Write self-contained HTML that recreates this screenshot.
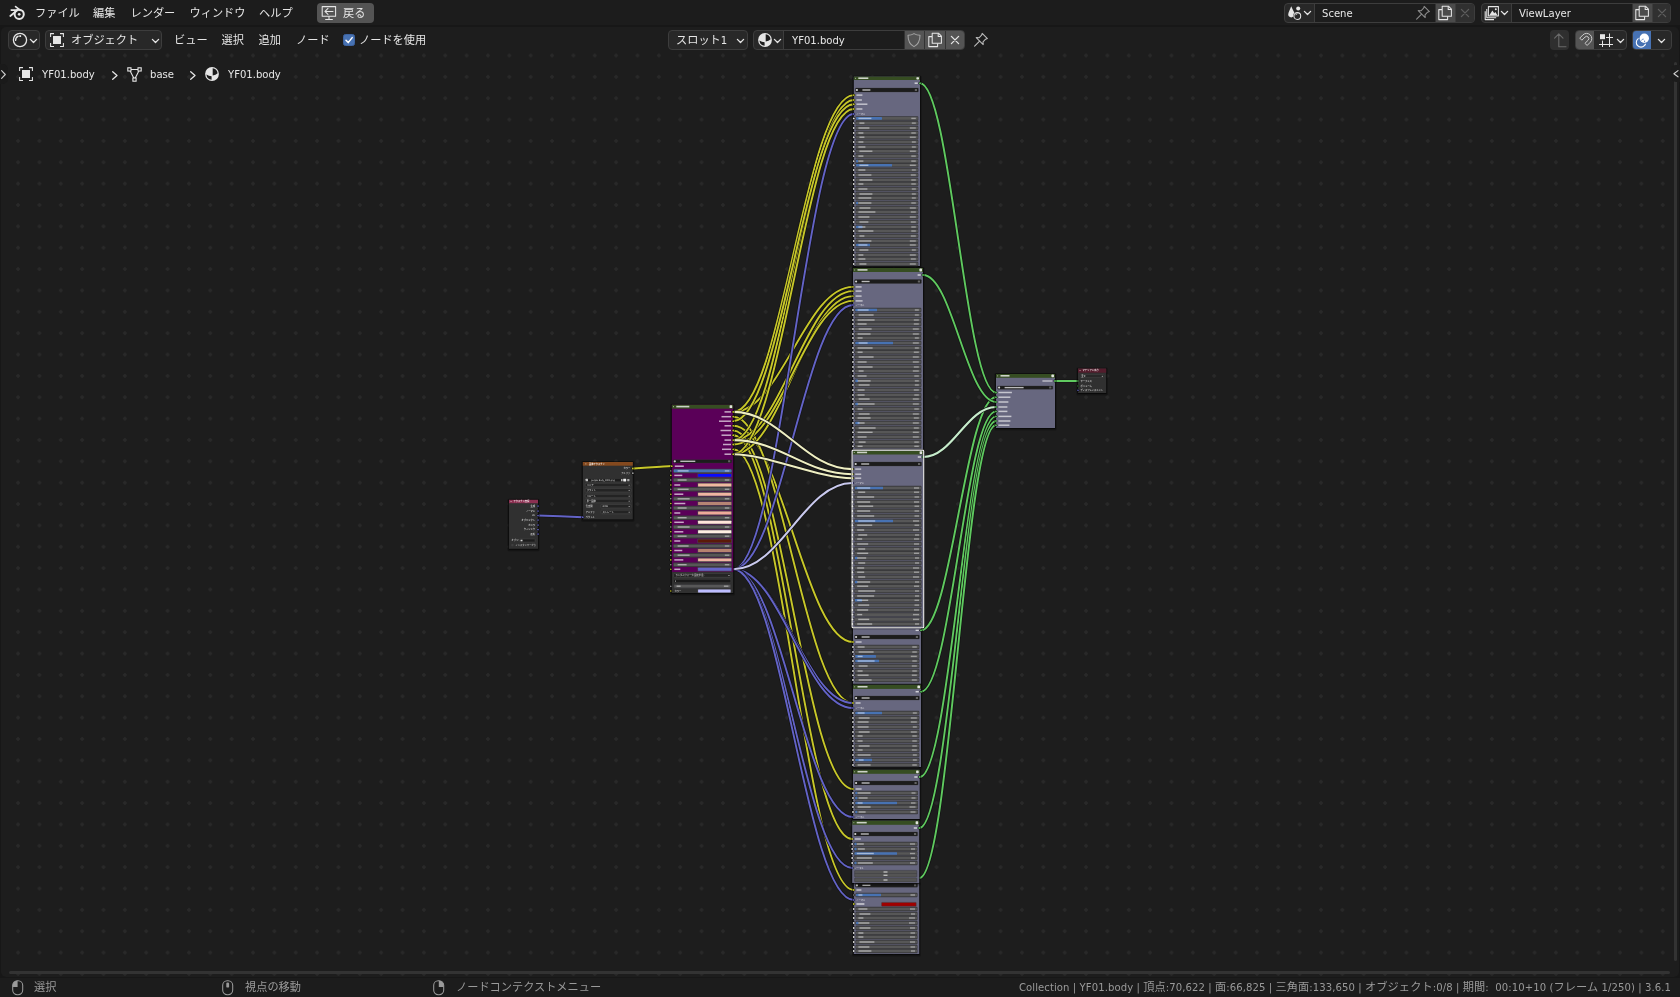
<!DOCTYPE html>
<html lang="ja"><head><meta charset="utf-8"><title>Blender</title>
<style>
html,body{margin:0;padding:0;background:#171717;overflow:hidden}
body{width:1680px;height:997px;position:relative;font-family:"DejaVu Sans","Liberation Sans","Noto Sans CJK JP",sans-serif;font-size:11px;color:#e6e6e6}
#editor{position:absolute;left:1px;top:27px;width:1678px;height:950px;background:#1d1d1d;border-radius:5px;overflow:hidden}
#grid{position:absolute;left:0;top:26px;width:1678px;height:924px;background-image:radial-gradient(circle at center,#292929 0,#292929 1.5px,rgba(41,41,41,0) 1.75px);background-size:21.37px 21.37px;background-position:6.4px -8.2px}
#graph{position:absolute;left:-1px;top:-27px;font-family:"DejaVu Sans","Liberation Sans","Noto Sans CJK JP",sans-serif;font-stretch:condensed;font-weight:500;will-change:transform}

.t{position:absolute;white-space:nowrap;line-height:16px;height:16px;font-size:11.2px;color:#e6e6e6;font-stretch:condensed}
#chrome{position:absolute;left:0;top:0;width:1680px;height:997px;will-change:transform}
.d{color:#9a9a9a}
.b{position:absolute;box-sizing:border-box}
.ic{position:absolute;overflow:visible}
#topbar{position:absolute;left:0;top:0;width:1680px;height:25px;background:#1c1c1c}
#status{position:absolute;left:0;top:978px;width:1680px;height:19px;background:#1c1c1c}
.btn{background:#282828;border:1px solid #3d3d3d;border-radius:4px}
.fld{background:#1d1d1d;border:1px solid #3d3d3d}

</style></head><body>
<div id="editor"><div id="grid"></div><svg id="graph" width="1680" height="997" viewBox="0 0 1680 997">
<path d="M538.0,515.5 C540.4,515.5 580.4,517.2 582.8,517.2" fill="none" stroke="#121212" stroke-width="3.1" stroke-opacity="0.95"/>
<path d="M538.0,515.5 C540.4,515.5 580.4,517.2 582.8,517.2" fill="none" stroke="#6363c7" stroke-width="2.0"/>
<path d="M632.8,468.5 C636.3,468.5 668.3,466.0 671.8,466.0" fill="none" stroke="#121212" stroke-width="3.1" stroke-opacity="0.95"/>
<path d="M632.8,468.5 C636.3,468.5 668.3,466.0 671.8,466.0" fill="none" stroke="#c7c729" stroke-width="2.0"/>
<path d="M733.2,425.8 C781.1,425.8 805.1,642.0 853.0,642.0" fill="none" stroke="#121212" stroke-width="3.3" stroke-opacity="0.95"/>
<path d="M733.2,425.8 C781.1,425.8 805.1,642.0 853.0,642.0" fill="none" stroke="#c7c729" stroke-width="1.9"/>
<path d="M733.2,416.7 C781.1,416.7 805.1,703.0 853.0,703.0" fill="none" stroke="#121212" stroke-width="3.3" stroke-opacity="0.95"/>
<path d="M733.2,416.7 C781.1,416.7 805.1,703.0 853.0,703.0" fill="none" stroke="#c7c729" stroke-width="1.9"/>
<path d="M733.2,430.5 C781.1,430.5 805.1,789.0 853.0,789.0" fill="none" stroke="#121212" stroke-width="3.3" stroke-opacity="0.95"/>
<path d="M733.2,430.5 C781.1,430.5 805.1,789.0 853.0,789.0" fill="none" stroke="#c7c729" stroke-width="1.9"/>
<path d="M733.2,435.2 C780.8,435.2 804.6,839.0 852.2,839.0" fill="none" stroke="#121212" stroke-width="3.3" stroke-opacity="0.95"/>
<path d="M733.2,435.2 C780.8,435.2 804.6,839.0 852.2,839.0" fill="none" stroke="#c7c729" stroke-width="1.9"/>
<path d="M733.2,449.3 C781.4,449.3 805.6,890.0 853.8,890.0" fill="none" stroke="#121212" stroke-width="3.3" stroke-opacity="0.95"/>
<path d="M733.2,449.3 C781.4,449.3 805.6,890.0 853.8,890.0" fill="none" stroke="#c7c729" stroke-width="1.9"/>
<path d="M733.2,411.9 C781.1,411.9 805.1,286.9 853.0,286.9" fill="none" stroke="#121212" stroke-width="3.3" stroke-opacity="0.95"/>
<path d="M733.2,411.9 C781.1,411.9 805.1,286.9 853.0,286.9" fill="none" stroke="#c7c729" stroke-width="1.9"/>
<path d="M733.2,440.1 C781.1,440.1 805.1,291.1 853.0,291.1" fill="none" stroke="#121212" stroke-width="3.3" stroke-opacity="0.95"/>
<path d="M733.2,440.1 C781.1,440.1 805.1,291.1 853.0,291.1" fill="none" stroke="#c7c729" stroke-width="1.9"/>
<path d="M733.2,454.2 C781.1,454.2 805.1,296.1 853.0,296.1" fill="none" stroke="#121212" stroke-width="3.3" stroke-opacity="0.95"/>
<path d="M733.2,454.2 C781.1,454.2 805.1,296.1 853.0,296.1" fill="none" stroke="#c7c729" stroke-width="1.9"/>
<path d="M733.2,444.5 C781.1,444.5 805.1,300.9 853.0,300.9" fill="none" stroke="#121212" stroke-width="3.3" stroke-opacity="0.95"/>
<path d="M733.2,444.5 C781.1,444.5 805.1,300.9 853.0,300.9" fill="none" stroke="#c7c729" stroke-width="1.9"/>
<path d="M733.2,411.9 C781.4,411.9 805.6,95.1 853.8,95.1" fill="none" stroke="#121212" stroke-width="3.3" stroke-opacity="0.95"/>
<path d="M733.2,411.9 C781.4,411.9 805.6,95.1 853.8,95.1" fill="none" stroke="#c7c729" stroke-width="1.9"/>
<path d="M733.2,440.1 C781.4,440.1 805.6,100.0 853.8,100.0" fill="none" stroke="#121212" stroke-width="3.3" stroke-opacity="0.95"/>
<path d="M733.2,440.1 C781.4,440.1 805.6,100.0 853.8,100.0" fill="none" stroke="#c7c729" stroke-width="1.9"/>
<path d="M733.2,421.2 C781.4,421.2 805.6,104.2 853.8,104.2" fill="none" stroke="#121212" stroke-width="3.3" stroke-opacity="0.95"/>
<path d="M733.2,421.2 C781.4,421.2 805.6,104.2 853.8,104.2" fill="none" stroke="#c7c729" stroke-width="1.9"/>
<path d="M733.2,454.2 C781.4,454.2 805.6,109.0 853.8,109.0" fill="none" stroke="#121212" stroke-width="3.3" stroke-opacity="0.95"/>
<path d="M733.2,454.2 C781.4,454.2 805.6,109.0 853.8,109.0" fill="none" stroke="#c7c729" stroke-width="1.9"/>
<path d="M733.2,569.2 C781.4,569.2 805.6,114.0 853.8,114.0" fill="none" stroke="#121212" stroke-width="3.3" stroke-opacity="0.95"/>
<path d="M733.2,569.2 C781.4,569.2 805.6,114.0 853.8,114.0" fill="none" stroke="#6363c7" stroke-width="1.9"/>
<path d="M733.2,569.2 C781.1,569.2 805.1,305.0 853.0,305.0" fill="none" stroke="#121212" stroke-width="3.3" stroke-opacity="0.95"/>
<path d="M733.2,569.2 C781.1,569.2 805.1,305.0 853.0,305.0" fill="none" stroke="#6363c7" stroke-width="1.9"/>
<path d="M733.2,569.2 C781.1,569.2 805.1,703.0 853.0,703.0" fill="none" stroke="#121212" stroke-width="3.3" stroke-opacity="0.95"/>
<path d="M733.2,569.2 C781.1,569.2 805.1,703.0 853.0,703.0" fill="none" stroke="#6363c7" stroke-width="1.9"/>
<path d="M733.2,569.2 C781.1,569.2 805.1,708.0 853.0,708.0" fill="none" stroke="#121212" stroke-width="3.3" stroke-opacity="0.95"/>
<path d="M733.2,569.2 C781.1,569.2 805.1,708.0 853.0,708.0" fill="none" stroke="#6363c7" stroke-width="1.9"/>
<path d="M733.2,569.2 C781.1,569.2 805.1,817.0 853.0,817.0" fill="none" stroke="#121212" stroke-width="3.3" stroke-opacity="0.95"/>
<path d="M733.2,569.2 C781.1,569.2 805.1,817.0 853.0,817.0" fill="none" stroke="#6363c7" stroke-width="1.9"/>
<path d="M733.2,569.2 C780.8,569.2 804.6,868.0 852.2,868.0" fill="none" stroke="#121212" stroke-width="3.3" stroke-opacity="0.95"/>
<path d="M733.2,569.2 C780.8,569.2 804.6,868.0 852.2,868.0" fill="none" stroke="#6363c7" stroke-width="1.9"/>
<path d="M733.2,569.2 C781.4,569.2 805.6,900.0 853.8,900.0" fill="none" stroke="#121212" stroke-width="3.3" stroke-opacity="0.95"/>
<path d="M733.2,569.2 C781.4,569.2 805.6,900.0 853.8,900.0" fill="none" stroke="#6363c7" stroke-width="1.9"/>
<path d="M920.0,83.2 C950.4,83.2 965.6,392.5 996.0,392.5" fill="none" stroke="#121212" stroke-width="3.3" stroke-opacity="0.95"/>
<path d="M920.0,83.2 C950.4,83.2 965.6,392.5 996.0,392.5" fill="none" stroke="#5fc95f" stroke-width="1.9"/>
<path d="M921.0,630.3 C951.0,630.3 966.0,397.2 996.0,397.2" fill="none" stroke="#121212" stroke-width="3.3" stroke-opacity="0.95"/>
<path d="M921.0,630.3 C951.0,630.3 966.0,397.2 996.0,397.2" fill="none" stroke="#5fc95f" stroke-width="1.9"/>
<path d="M923.0,275.0 C952.2,275.0 966.8,402.0 996.0,402.0" fill="none" stroke="#121212" stroke-width="3.3" stroke-opacity="0.95"/>
<path d="M923.0,275.0 C952.2,275.0 966.8,402.0 996.0,402.0" fill="none" stroke="#5fc95f" stroke-width="1.9"/>
<path d="M921.0,691.7 C951.0,691.7 966.0,411.4 996.0,411.4" fill="none" stroke="#121212" stroke-width="3.3" stroke-opacity="0.95"/>
<path d="M921.0,691.7 C951.0,691.7 966.0,411.4 996.0,411.4" fill="none" stroke="#5fc95f" stroke-width="1.9"/>
<path d="M919.7,777.0 C950.2,777.0 965.5,416.4 996.0,416.4" fill="none" stroke="#121212" stroke-width="3.3" stroke-opacity="0.95"/>
<path d="M919.7,777.0 C950.2,777.0 965.5,416.4 996.0,416.4" fill="none" stroke="#5fc95f" stroke-width="1.9"/>
<path d="M919.3,828.0 C950.0,828.0 965.3,421.0 996.0,421.0" fill="none" stroke="#121212" stroke-width="3.3" stroke-opacity="0.95"/>
<path d="M919.3,828.0 C950.0,828.0 965.3,421.0 996.0,421.0" fill="none" stroke="#5fc95f" stroke-width="1.9"/>
<path d="M919.3,878.0 C950.0,878.0 965.3,425.2 996.0,425.2" fill="none" stroke="#121212" stroke-width="3.3" stroke-opacity="0.95"/>
<path d="M919.3,878.0 C950.0,878.0 965.3,425.2 996.0,425.2" fill="none" stroke="#5fc95f" stroke-width="1.9"/>
<path d="M1055.0,381.0 C1055.0,381.0 1078.0,381.0 1078.0,381.0" fill="none" stroke="#121212" stroke-width="3.0" stroke-opacity="0.95"/>
<path d="M1055.0,381.0 C1055.0,381.0 1078.0,381.0 1078.0,381.0" fill="none" stroke="#5fc95f" stroke-width="2.0"/>
<path d="M733.2,411.9 C780.8,411.9 804.6,469.1 852.2,469.1" fill="none" stroke="#121212" stroke-width="3.3" stroke-opacity="0.95"/>
<path d="M733.2,411.9 C780.8,411.9 804.6,469.1 852.2,469.1" fill="none" stroke="#eeeec2" stroke-width="2.1"/>
<path d="M733.2,440.1 C780.8,440.1 804.6,474.2 852.2,474.2" fill="none" stroke="#121212" stroke-width="3.3" stroke-opacity="0.95"/>
<path d="M733.2,440.1 C780.8,440.1 804.6,474.2 852.2,474.2" fill="none" stroke="#eeeec2" stroke-width="2.1"/>
<path d="M733.2,454.2 C766.8,454.2 818.6,478.2 852.2,478.2" fill="none" stroke="#121212" stroke-width="3.3" stroke-opacity="0.95"/>
<path d="M733.2,454.2 C766.8,454.2 818.6,478.2 852.2,478.2" fill="none" stroke="#eeeec2" stroke-width="2.1"/>
<path d="M733.2,569.2 C780.8,569.2 804.6,483.0 852.2,483.0" fill="none" stroke="#121212" stroke-width="3.3" stroke-opacity="0.95"/>
<path d="M733.2,569.2 C780.8,569.2 804.6,483.0 852.2,483.0" fill="none" stroke="#c9c9ee" stroke-width="2.1"/>
<path d="M923.4,457.0 C952.4,457.0 967.0,407.0 996.0,407.0" fill="none" stroke="#121212" stroke-width="3.3" stroke-opacity="0.95"/>
<path d="M923.4,457.0 C952.4,457.0 967.0,407.0 996.0,407.0" fill="none" stroke="#c6eccb" stroke-width="2.1"/>
<rect x="507.40" y="498.80" width="32.20" height="52.40" fill="#000" rx="1.5" opacity="0.28"/>
<rect x="508.30" y="499.20" width="30.40" height="50.50" fill="#000" rx="1.0" opacity="0.55"/>
<rect x="509.00" y="499.80" width="29.00" height="49.00" fill="#303030"/>
<rect x="509.00" y="499.80" width="29.00" height="3.40" fill="#8b3051"/>
<rect x="510.60" y="501.05" width="0.90" height="0.90" fill="#ffffff" opacity="0.7"/>
<text transform="translate(513.60,502.35) scale(0.208)" font-size="11" fill="#ffffff" fill-opacity="0.95">テクスチャ座標</text>
<text transform="translate(535.00,506.85) scale(0.208)" font-size="11" text-anchor="end" fill="#ffffff" fill-opacity="0.85">生成</text>
<circle cx="538.00" cy="506.00" r="1.30" fill="#070707"/><circle cx="538.00" cy="506.00" r="0.85" fill="#6363c7"/>
<text transform="translate(535.00,511.85) scale(0.208)" font-size="11" text-anchor="end" fill="#ffffff" fill-opacity="0.85">ノーマル</text>
<circle cx="538.00" cy="511.00" r="1.30" fill="#070707"/><circle cx="538.00" cy="511.00" r="0.85" fill="#6363c7"/>
<text transform="translate(535.00,516.45) scale(0.208)" font-size="11" text-anchor="end" fill="#ffffff" fill-opacity="0.85">UV</text>
<circle cx="538.00" cy="515.60" r="1.30" fill="#070707"/><circle cx="538.00" cy="515.60" r="0.85" fill="#6363c7"/>
<text transform="translate(535.00,520.85) scale(0.208)" font-size="11" text-anchor="end" fill="#ffffff" fill-opacity="0.85">オブジェクト</text>
<circle cx="538.00" cy="520.00" r="1.30" fill="#070707"/><circle cx="538.00" cy="520.00" r="0.85" fill="#6363c7"/>
<text transform="translate(535.00,525.85) scale(0.208)" font-size="11" text-anchor="end" fill="#ffffff" fill-opacity="0.85">カメラ</text>
<circle cx="538.00" cy="525.00" r="1.30" fill="#070707"/><circle cx="538.00" cy="525.00" r="0.85" fill="#6363c7"/>
<text transform="translate(535.00,530.45) scale(0.208)" font-size="11" text-anchor="end" fill="#ffffff" fill-opacity="0.85">ウィンドウ</text>
<circle cx="538.00" cy="529.60" r="1.30" fill="#070707"/><circle cx="538.00" cy="529.60" r="0.85" fill="#6363c7"/>
<text transform="translate(535.00,534.85) scale(0.208)" font-size="11" text-anchor="end" fill="#ffffff" fill-opacity="0.85">反射</text>
<circle cx="538.00" cy="534.00" r="1.30" fill="#070707"/><circle cx="538.00" cy="534.00" r="0.85" fill="#6363c7"/>
<text transform="translate(511.60,541.35) scale(0.208)" font-size="11" fill="#ffffff" fill-opacity="0.75">オブジ…</text>
<rect x="519.50" y="539.00" width="15.50" height="3.00" fill="#1c1c1c" rx="0.6" stroke="#555" stroke-width="0.35"/>
<rect x="520.50" y="539.70" width="2.00" height="1.60" fill="#ffffff" opacity="0.8"/>
<rect x="511.30" y="544.00" width="2.20" height="2.20" fill="#3f3f3f" rx="0.4"/>
<text transform="translate(515.60,546.05) scale(0.208)" font-size="11" fill="#ffffff" fill-opacity="0.65">インスタンサーから</text>
<rect x="581.20" y="461.00" width="53.20" height="60.80" fill="#000" rx="1.5" opacity="0.28"/>
<rect x="582.10" y="461.40" width="51.40" height="58.90" fill="#000" rx="1.0" opacity="0.55"/>
<rect x="582.80" y="462.00" width="50.00" height="57.40" fill="#303030"/>
<rect x="582.80" y="462.00" width="50.00" height="3.70" fill="#84491e"/>
<rect x="585.40" y="463.45" width="0.90" height="0.90" fill="#ffffff" opacity="0.7"/>
<text transform="translate(589.00,464.55) scale(0.208)" font-size="11" fill="#ffffff" fill-opacity="0.95">画像テクスチャ</text>
<text transform="translate(630.30,469.35) scale(0.208)" font-size="11" text-anchor="end" fill="#ffffff" fill-opacity="0.85">カラー</text>
<circle cx="632.80" cy="468.50" r="1.35" fill="#070707"/><circle cx="632.80" cy="468.50" r="0.9" fill="#c7c729"/>
<text transform="translate(630.30,474.05) scale(0.208)" font-size="11" text-anchor="end" fill="#ffffff" fill-opacity="0.7">アルファ</text>
<circle cx="632.80" cy="473.20" r="1.35" fill="#070707"/><circle cx="632.80" cy="473.20" r="0.9" fill="#a1a1a1"/>
<rect x="585.20" y="478.40" width="45.20" height="3.30" fill="#1c1c1c" rx="0.6" stroke="#4a4a4a" stroke-width="0.3"/>
<rect x="585.60" y="478.80" width="2.40" height="2.50" fill="#ddd" rx="0.4" opacity="0.85"/>
<text transform="translate(591.30,480.95) scale(0.208)" font-size="11" fill="#ffffff" fill-opacity="0.85">purple_Body_1001.png</text>
<rect x="621.00" y="478.90" width="1.60" height="2.30" fill="#ddd" rx="0.3" opacity="0.8"/>
<rect x="623.20" y="478.70" width="3.00" height="2.70" fill="#f2f2f2" rx="0.4"/>
<rect x="627.20" y="478.90" width="2.30" height="2.30" fill="#ddd" rx="0.3" opacity="0.75"/>
<rect x="585.20" y="483.20" width="45.80" height="3.60" fill="#232323" rx="0.6" stroke="#535353" stroke-width="0.45"/>
<text transform="translate(586.80,485.85) scale(0.208)" font-size="11" fill="#ffffff" fill-opacity="0.8">リニア</text>
<rect x="628.60" y="484.75" width="1.20" height="0.90" fill="#ffffff" opacity="0.6"/>
<rect x="585.20" y="488.40" width="45.80" height="3.60" fill="#232323" rx="0.6" stroke="#535353" stroke-width="0.45"/>
<text transform="translate(586.80,491.05) scale(0.208)" font-size="11" fill="#ffffff" fill-opacity="0.8">フラット</text>
<rect x="628.60" y="489.95" width="1.20" height="0.90" fill="#ffffff" opacity="0.6"/>
<rect x="585.20" y="494.20" width="45.80" height="3.60" fill="#232323" rx="0.6" stroke="#535353" stroke-width="0.45"/>
<text transform="translate(586.80,496.85) scale(0.208)" font-size="11" fill="#ffffff" fill-opacity="0.8">リピート</text>
<rect x="628.60" y="495.75" width="1.20" height="0.90" fill="#ffffff" opacity="0.6"/>
<rect x="585.20" y="499.20" width="45.80" height="3.60" fill="#232323" rx="0.6" stroke="#535353" stroke-width="0.45"/>
<text transform="translate(586.80,501.85) scale(0.208)" font-size="11" fill="#ffffff" fill-opacity="0.8">単一画像</text>
<rect x="628.60" y="500.75" width="1.20" height="0.90" fill="#ffffff" opacity="0.6"/>
<text transform="translate(585.80,507.05) scale(0.208)" font-size="11" fill="#ffffff" fill-opacity="0.8">色空間</text>
<rect x="601.00" y="504.40" width="30.00" height="3.60" fill="#232323" rx="0.6" stroke="#535353" stroke-width="0.45"/>
<text transform="translate(602.50,507.05) scale(0.208)" font-size="11" fill="#ffffff" fill-opacity="0.8">sRGB</text>
<rect x="628.60" y="505.95" width="1.20" height="0.90" fill="#ffffff" opacity="0.6"/>
<text transform="translate(585.80,512.85) scale(0.208)" font-size="11" fill="#ffffff" fill-opacity="0.8">アルファ</text>
<rect x="601.00" y="510.20" width="30.00" height="3.60" fill="#232323" rx="0.6" stroke="#535353" stroke-width="0.45"/>
<text transform="translate(602.50,512.85) scale(0.208)" font-size="11" fill="#ffffff" fill-opacity="0.8">ストレート</text>
<rect x="628.60" y="511.75" width="1.20" height="0.90" fill="#ffffff" opacity="0.6"/>
<text transform="translate(585.80,518.05) scale(0.208)" font-size="11" fill="#ffffff" fill-opacity="0.75">ベクトル</text>
<circle cx="582.80" cy="517.20" r="1.35" fill="#070707"/><circle cx="582.80" cy="517.20" r="0.9" fill="#6363c7"/>
<rect x="670.20" y="403.70" width="64.60" height="191.70" fill="#000" rx="1.5" opacity="0.28"/>
<rect x="671.10" y="404.10" width="62.80" height="189.80" fill="#000" rx="1.0" opacity="0.55"/>
<rect x="671.80" y="404.70" width="61.40" height="167.30" fill="#5a0058"/>
<rect x="671.80" y="572.00" width="61.40" height="21.00" fill="#303030"/>
<rect x="671.80" y="404.70" width="61.40" height="4.00" fill="#364d22"/>
<rect x="673.00" y="406.25" width="0.90" height="0.90" fill="#ffffff" opacity="0.7"/>
<rect x="676.30" y="405.80" width="13.00" height="1.60" fill="#ffffff" opacity="0.75"/>
<rect x="729.60" y="405.30" width="2.60" height="2.80" fill="#ffffff" rx="0.6" opacity="0.85"/>
<rect x="724.50" y="411.15" width="6.50" height="1.50" fill="#ffffff" opacity="0.66"/>
<circle cx="733.20" cy="411.90" r="1.35" fill="#070707"/><circle cx="733.20" cy="411.90" r="0.9" fill="#c7c729"/>
<rect x="721.50" y="415.95" width="9.50" height="1.50" fill="#ffffff" opacity="0.66"/>
<circle cx="733.20" cy="416.70" r="1.35" fill="#070707"/><circle cx="733.20" cy="416.70" r="0.9" fill="#c7c729"/>
<rect x="719.00" y="420.45" width="12.00" height="1.50" fill="#ffffff" opacity="0.66"/>
<circle cx="733.20" cy="421.20" r="1.35" fill="#070707"/><circle cx="733.20" cy="421.20" r="0.9" fill="#c7c729"/>
<rect x="724.50" y="425.05" width="6.50" height="1.50" fill="#ffffff" opacity="0.66"/>
<circle cx="733.20" cy="425.80" r="1.35" fill="#070707"/><circle cx="733.20" cy="425.80" r="0.9" fill="#c7c729"/>
<rect x="720.50" y="429.75" width="10.50" height="1.50" fill="#ffffff" opacity="0.66"/>
<circle cx="733.20" cy="430.50" r="1.35" fill="#070707"/><circle cx="733.20" cy="430.50" r="0.9" fill="#c7c729"/>
<rect x="721.50" y="434.45" width="9.50" height="1.50" fill="#ffffff" opacity="0.66"/>
<circle cx="733.20" cy="435.20" r="1.35" fill="#070707"/><circle cx="733.20" cy="435.20" r="0.9" fill="#c7c729"/>
<rect x="724.50" y="439.35" width="6.50" height="1.50" fill="#ffffff" opacity="0.66"/>
<circle cx="733.20" cy="440.10" r="1.35" fill="#070707"/><circle cx="733.20" cy="440.10" r="0.9" fill="#c7c729"/>
<rect x="723.00" y="443.75" width="8.00" height="1.50" fill="#ffffff" opacity="0.66"/>
<circle cx="733.20" cy="444.50" r="1.35" fill="#070707"/><circle cx="733.20" cy="444.50" r="0.9" fill="#c7c729"/>
<rect x="722.00" y="448.55" width="9.00" height="1.50" fill="#ffffff" opacity="0.66"/>
<circle cx="733.20" cy="449.30" r="1.35" fill="#070707"/><circle cx="733.20" cy="449.30" r="0.9" fill="#c7c729"/>
<rect x="724.50" y="453.45" width="6.50" height="1.50" fill="#ffffff" opacity="0.66"/>
<circle cx="733.20" cy="454.20" r="1.35" fill="#070707"/><circle cx="733.20" cy="454.20" r="0.9" fill="#c7c729"/>
<rect x="673.30" y="459.65" width="58.40" height="3.30" fill="#1c1c1c" rx="0.7" stroke="#3a3a3a" stroke-width="0.3"/>
<rect x="673.70" y="460.20" width="2.20" height="2.20" fill="#e8e8e8" rx="1.1" opacity="0.9"/>
<rect x="680.30" y="460.60" width="15.00" height="1.40" fill="#ffffff" opacity="0.7"/>
<rect x="728.10" y="460.30" width="2.20" height="2.00" fill="#777" rx="0.3" opacity="0.8"/>
<rect x="674.80" y="465.45" width="9.00" height="1.50" fill="#ffffff" opacity="0.66"/>
<circle cx="671.80" cy="466.20" r="1.35" fill="#070707"/><circle cx="671.80" cy="466.20" r="0.9" fill="#c7c729"/>
<rect x="673.20" y="468.65" width="58.60" height="4.50" fill="#3a3a3c" rx="0.9"/>
<rect x="673.80" y="469.60" width="57.40" height="2.60" fill="#575757" rx="0.5"/>
<rect x="673.80" y="469.60" width="57.70" height="2.60" fill="#4772b3" rx="0.4"/>
<rect x="677.60" y="470.20" width="11.00" height="1.40" fill="#ffffff" opacity="0.5"/>
<rect x="724.80" y="470.20" width="4.50" height="1.40" fill="#ffffff" opacity="0.42"/>
<circle cx="670.80" cy="470.90" r="1.15" fill="#070707"/><circle cx="670.80" cy="470.90" r="0.7" fill="#b0b0b0"/>
<rect x="673.20" y="477.75" width="58.60" height="4.50" fill="#3a3a3c" rx="0.9"/>
<rect x="673.80" y="478.70" width="57.40" height="2.60" fill="#575757" rx="0.5"/>
<rect x="677.60" y="479.30" width="9.00" height="1.40" fill="#ffffff" opacity="0.5"/>
<rect x="724.80" y="479.30" width="4.50" height="1.40" fill="#ffffff" opacity="0.42"/>
<circle cx="670.80" cy="480.00" r="1.15" fill="#070707"/><circle cx="670.80" cy="480.00" r="0.7" fill="#b0b0b0"/>
<rect x="673.20" y="487.05" width="58.60" height="4.50" fill="#3a3a3c" rx="0.9"/>
<rect x="673.80" y="488.00" width="57.40" height="2.60" fill="#575757" rx="0.5"/>
<rect x="677.60" y="488.60" width="11.00" height="1.40" fill="#ffffff" opacity="0.5"/>
<rect x="724.80" y="488.60" width="4.50" height="1.40" fill="#ffffff" opacity="0.42"/>
<circle cx="670.80" cy="489.30" r="1.15" fill="#070707"/><circle cx="670.80" cy="489.30" r="0.7" fill="#b0b0b0"/>
<rect x="673.20" y="496.55" width="58.60" height="4.50" fill="#3a3a3c" rx="0.9"/>
<rect x="673.80" y="497.50" width="57.40" height="2.60" fill="#575757" rx="0.5"/>
<rect x="677.60" y="498.10" width="12.00" height="1.40" fill="#ffffff" opacity="0.5"/>
<rect x="724.80" y="498.10" width="4.50" height="1.40" fill="#ffffff" opacity="0.42"/>
<circle cx="670.80" cy="498.80" r="1.15" fill="#070707"/><circle cx="670.80" cy="498.80" r="0.7" fill="#b0b0b0"/>
<rect x="673.20" y="505.75" width="58.60" height="4.50" fill="#3a3a3c" rx="0.9"/>
<rect x="673.80" y="506.70" width="57.40" height="2.60" fill="#575757" rx="0.5"/>
<rect x="677.60" y="507.30" width="9.00" height="1.40" fill="#ffffff" opacity="0.5"/>
<rect x="724.80" y="507.30" width="4.50" height="1.40" fill="#ffffff" opacity="0.42"/>
<circle cx="670.80" cy="508.00" r="1.15" fill="#070707"/><circle cx="670.80" cy="508.00" r="0.7" fill="#b0b0b0"/>
<rect x="673.20" y="515.45" width="58.60" height="4.50" fill="#3a3a3c" rx="0.9"/>
<rect x="673.80" y="516.40" width="57.40" height="2.60" fill="#575757" rx="0.5"/>
<rect x="677.60" y="517.00" width="9.00" height="1.40" fill="#ffffff" opacity="0.5"/>
<rect x="724.80" y="517.00" width="4.50" height="1.40" fill="#ffffff" opacity="0.42"/>
<circle cx="670.80" cy="517.70" r="1.15" fill="#070707"/><circle cx="670.80" cy="517.70" r="0.7" fill="#b0b0b0"/>
<rect x="673.20" y="524.75" width="58.60" height="4.50" fill="#3a3a3c" rx="0.9"/>
<rect x="673.80" y="525.70" width="57.40" height="2.60" fill="#575757" rx="0.5"/>
<rect x="677.60" y="526.30" width="12.00" height="1.40" fill="#ffffff" opacity="0.5"/>
<rect x="724.80" y="526.30" width="4.50" height="1.40" fill="#ffffff" opacity="0.42"/>
<circle cx="670.80" cy="527.00" r="1.15" fill="#070707"/><circle cx="670.80" cy="527.00" r="0.7" fill="#b0b0b0"/>
<rect x="673.20" y="533.95" width="58.60" height="4.50" fill="#3a3a3c" rx="0.9"/>
<rect x="673.80" y="534.90" width="57.40" height="2.60" fill="#575757" rx="0.5"/>
<rect x="677.60" y="535.50" width="9.00" height="1.40" fill="#ffffff" opacity="0.5"/>
<rect x="724.80" y="535.50" width="4.50" height="1.40" fill="#ffffff" opacity="0.42"/>
<circle cx="670.80" cy="536.20" r="1.15" fill="#070707"/><circle cx="670.80" cy="536.20" r="0.7" fill="#b0b0b0"/>
<rect x="673.20" y="543.75" width="58.60" height="4.50" fill="#3a3a3c" rx="0.9"/>
<rect x="673.80" y="544.70" width="57.40" height="2.60" fill="#575757" rx="0.5"/>
<rect x="677.60" y="545.30" width="11.00" height="1.40" fill="#ffffff" opacity="0.5"/>
<rect x="724.80" y="545.30" width="4.50" height="1.40" fill="#ffffff" opacity="0.42"/>
<circle cx="670.80" cy="546.00" r="1.15" fill="#070707"/><circle cx="670.80" cy="546.00" r="0.7" fill="#b0b0b0"/>
<rect x="673.20" y="552.95" width="58.60" height="4.50" fill="#3a3a3c" rx="0.9"/>
<rect x="673.80" y="553.90" width="57.40" height="2.60" fill="#575757" rx="0.5"/>
<rect x="677.60" y="554.50" width="12.00" height="1.40" fill="#ffffff" opacity="0.5"/>
<rect x="724.80" y="554.50" width="4.50" height="1.40" fill="#ffffff" opacity="0.42"/>
<circle cx="670.80" cy="555.20" r="1.15" fill="#070707"/><circle cx="670.80" cy="555.20" r="0.7" fill="#b0b0b0"/>
<rect x="673.20" y="562.45" width="58.60" height="4.50" fill="#3a3a3c" rx="0.9"/>
<rect x="673.80" y="563.40" width="57.40" height="2.60" fill="#575757" rx="0.5"/>
<rect x="677.60" y="564.00" width="9.00" height="1.40" fill="#ffffff" opacity="0.5"/>
<rect x="724.80" y="564.00" width="4.50" height="1.40" fill="#ffffff" opacity="0.42"/>
<circle cx="670.80" cy="564.70" r="1.15" fill="#070707"/><circle cx="670.80" cy="564.70" r="0.7" fill="#b0b0b0"/>
<rect x="674.30" y="474.65" width="8.00" height="1.50" fill="#ffffff" opacity="0.66"/>
<rect x="697.40" y="473.20" width="34.60" height="4.40" fill="#47404a" rx="0.8"/>
<rect x="698.10" y="473.95" width="33.20" height="2.90" fill="#0a0aff" rx="0.3"/>
<circle cx="670.80" cy="475.40" r="1.25" fill="#070707"/><circle cx="670.80" cy="475.40" r="0.8" fill="#c7c729"/>
<rect x="674.30" y="484.25" width="6.00" height="1.50" fill="#ffffff" opacity="0.66"/>
<rect x="697.40" y="482.80" width="34.60" height="4.40" fill="#47404a" rx="0.8"/>
<rect x="698.10" y="483.55" width="33.20" height="2.90" fill="#f0b9a0" rx="0.3"/>
<circle cx="670.80" cy="485.00" r="1.25" fill="#070707"/><circle cx="670.80" cy="485.00" r="0.8" fill="#c7c729"/>
<rect x="674.30" y="493.45" width="9.00" height="1.50" fill="#ffffff" opacity="0.66"/>
<rect x="697.40" y="492.00" width="34.60" height="4.40" fill="#47404a" rx="0.8"/>
<rect x="698.10" y="492.75" width="33.20" height="2.90" fill="#f0b5a2" rx="0.3"/>
<circle cx="670.80" cy="494.20" r="1.25" fill="#070707"/><circle cx="670.80" cy="494.20" r="0.8" fill="#c7c729"/>
<rect x="674.30" y="502.75" width="11.00" height="1.50" fill="#ffffff" opacity="0.66"/>
<rect x="697.40" y="501.30" width="34.60" height="4.40" fill="#47404a" rx="0.8"/>
<rect x="698.10" y="502.05" width="33.20" height="2.90" fill="#b58474" rx="0.3"/>
<circle cx="670.80" cy="503.50" r="1.25" fill="#070707"/><circle cx="670.80" cy="503.50" r="0.8" fill="#c7c729"/>
<rect x="674.30" y="512.25" width="6.00" height="1.50" fill="#ffffff" opacity="0.66"/>
<rect x="697.40" y="510.80" width="34.60" height="4.40" fill="#47404a" rx="0.8"/>
<rect x="698.10" y="511.55" width="33.20" height="2.90" fill="#f0a99a" rx="0.3"/>
<circle cx="670.80" cy="513.00" r="1.25" fill="#070707"/><circle cx="670.80" cy="513.00" r="0.8" fill="#c7c729"/>
<rect x="674.30" y="521.55" width="9.50" height="1.50" fill="#ffffff" opacity="0.66"/>
<rect x="697.40" y="520.10" width="34.60" height="4.40" fill="#47404a" rx="0.8"/>
<rect x="698.10" y="520.85" width="33.20" height="2.90" fill="#ffe4da" rx="0.3"/>
<circle cx="670.80" cy="522.30" r="1.25" fill="#070707"/><circle cx="670.80" cy="522.30" r="0.8" fill="#c7c729"/>
<rect x="674.30" y="531.05" width="9.00" height="1.50" fill="#ffffff" opacity="0.66"/>
<rect x="697.40" y="529.60" width="34.60" height="4.40" fill="#47404a" rx="0.8"/>
<rect x="698.10" y="530.35" width="33.20" height="2.90" fill="#fff0e2" rx="0.3"/>
<circle cx="670.80" cy="531.80" r="1.25" fill="#070707"/><circle cx="670.80" cy="531.80" r="0.8" fill="#c7c729"/>
<rect x="674.30" y="540.25" width="6.00" height="1.50" fill="#ffffff" opacity="0.66"/>
<rect x="697.40" y="538.80" width="34.60" height="4.40" fill="#47404a" rx="0.8"/>
<rect x="698.10" y="539.55" width="33.20" height="2.90" fill="#5c1a08" rx="0.3"/>
<circle cx="670.80" cy="541.00" r="1.25" fill="#070707"/><circle cx="670.80" cy="541.00" r="0.8" fill="#c7c729"/>
<rect x="674.30" y="549.75" width="8.00" height="1.50" fill="#ffffff" opacity="0.66"/>
<rect x="697.40" y="548.30" width="34.60" height="4.40" fill="#47404a" rx="0.8"/>
<rect x="698.10" y="549.05" width="33.20" height="2.90" fill="#b6826f" rx="0.3"/>
<circle cx="670.80" cy="550.50" r="1.25" fill="#070707"/><circle cx="670.80" cy="550.50" r="0.8" fill="#c7c729"/>
<rect x="674.30" y="559.15" width="9.00" height="1.50" fill="#ffffff" opacity="0.66"/>
<rect x="697.40" y="557.70" width="34.60" height="4.40" fill="#47404a" rx="0.8"/>
<rect x="698.10" y="558.45" width="33.20" height="2.90" fill="#efb3a2" rx="0.3"/>
<circle cx="670.80" cy="559.90" r="1.25" fill="#070707"/><circle cx="670.80" cy="559.90" r="0.8" fill="#c7c729"/>
<rect x="674.30" y="568.55" width="6.00" height="1.50" fill="#ffffff" opacity="0.66"/>
<rect x="697.40" y="567.10" width="34.60" height="4.40" fill="#47404a" rx="0.8"/>
<rect x="698.10" y="567.85" width="33.20" height="2.90" fill="#6565c9" rx="0.3"/>
<circle cx="670.80" cy="569.30" r="1.25" fill="#070707"/><circle cx="670.80" cy="569.30" r="0.8" fill="#c7c729"/>
<rect x="673.60" y="573.40" width="57.20" height="3.90" fill="#242424" rx="0.7" stroke="#4f4f4f" stroke-width="0.5"/>
<text transform="translate(675.40,576.15) scale(0.208)" font-size="11" fill="#ffffff" fill-opacity="0.75">ランダムウォーク(固定半径)</text>
<rect x="728.30" y="575.05" width="1.30" height="0.90" fill="#ffffff" opacity="0.6"/>
<rect x="673.60" y="579.30" width="57.20" height="3.40" fill="#191919" rx="0.7" stroke="#474747" stroke-width="0.5"/>
<rect x="675.10" y="580.60" width="0.90" height="1.00" fill="#ffffff" opacity="0.8"/>
<rect x="673.70" y="583.95" width="57.20" height="4.50" fill="#3a3a3c" rx="0.9"/>
<rect x="674.30" y="584.90" width="56.00" height="2.60" fill="#575757" rx="0.5"/>
<rect x="676.60" y="585.50" width="4.00" height="1.40" fill="#ffffff" opacity="0.5"/>
<rect x="723.90" y="585.50" width="4.50" height="1.40" fill="#ffffff" opacity="0.42"/>
<circle cx="670.80" cy="586.20" r="1.15" fill="#070707"/><circle cx="670.80" cy="586.20" r="0.7" fill="#b0b0b0"/>
<text transform="translate(674.40,591.85) scale(0.208)" font-size="11" fill="#ffffff" fill-opacity="0.75">カラー</text>
<rect x="697.40" y="588.90" width="33.90" height="4.20" fill="#444" rx="0.8"/>
<rect x="698.10" y="589.60" width="32.50" height="2.80" fill="#bcbcff" rx="0.3"/>
<circle cx="670.80" cy="591.00" r="1.25" fill="#070707"/><circle cx="670.80" cy="591.00" r="0.8" fill="#c7c729"/>
<rect x="852.20" y="75.60" width="69.40" height="192.80" fill="#000" rx="1.5" opacity="0.28"/>
<rect x="853.10" y="76.00" width="67.60" height="190.90" fill="#000" rx="1.0" opacity="0.55"/>
<rect x="853.80" y="76.60" width="66.20" height="189.40" fill="#67677f"/>
<rect x="853.80" y="76.60" width="66.20" height="3.40" fill="#364d22"/>
<rect x="855.00" y="77.85" width="0.90" height="0.90" fill="#ffffff" opacity="0.7"/>
<rect x="858.30" y="77.40" width="10.00" height="1.60" fill="#ffffff" opacity="0.75"/>
<rect x="916.40" y="77.20" width="2.60" height="2.20" fill="#ffffff" rx="0.6" opacity="0.85"/>
<rect x="914.60" y="82.45" width="3.20" height="1.50" fill="#ffffff" opacity="0.7"/>
<rect x="855.40" y="88.00" width="63.00" height="4.00" fill="#1c1c1c" rx="0.7" stroke="#3a3a3a" stroke-width="0.3"/>
<rect x="855.80" y="88.90" width="2.20" height="2.20" fill="#e8e8e8" rx="1.1" opacity="0.9"/>
<rect x="862.40" y="89.30" width="8.00" height="1.40" fill="#ffffff" opacity="0.7"/>
<rect x="914.80" y="89.00" width="2.20" height="2.00" fill="#777" rx="0.3" opacity="0.8"/>
<rect x="856.40" y="94.35" width="6.00" height="1.50" fill="#ffffff" opacity="0.6"/>
<circle cx="853.80" cy="95.10" r="1.35" fill="#070707"/><circle cx="853.80" cy="95.10" r="0.9" fill="#c7c729"/>
<rect x="856.40" y="99.25" width="5.50" height="1.50" fill="#ffffff" opacity="0.6"/>
<circle cx="853.80" cy="100.00" r="1.35" fill="#070707"/><circle cx="853.80" cy="100.00" r="0.9" fill="#c7c729"/>
<rect x="856.40" y="103.45" width="11.00" height="1.50" fill="#ffffff" opacity="0.6"/>
<circle cx="853.80" cy="104.20" r="1.35" fill="#070707"/><circle cx="853.80" cy="104.20" r="0.9" fill="#c7c729"/>
<rect x="856.40" y="108.25" width="6.00" height="1.50" fill="#ffffff" opacity="0.6"/>
<circle cx="853.80" cy="109.00" r="1.35" fill="#070707"/><circle cx="853.80" cy="109.00" r="0.9" fill="#c7c729"/>
<text transform="translate(856.20,114.85) scale(0.208)" font-size="11" fill="#ffffff" fill-opacity="0.7">ノーマル</text>
<circle cx="853.80" cy="114.00" r="1.35" fill="#070707"/><circle cx="853.80" cy="114.00" r="0.9" fill="#6363c7"/>
<rect x="855.50" y="116.15" width="62.80" height="4.50" fill="#3a3a3c" rx="0.9"/>
<rect x="856.10" y="117.10" width="61.60" height="2.60" fill="#575757" rx="0.5"/>
<rect x="856.10" y="117.10" width="25.90" height="2.60" fill="#4772b3" rx="0.4"/>
<rect x="858.40" y="117.70" width="13.00" height="1.40" fill="#ffffff" opacity="0.5"/>
<rect x="911.30" y="117.70" width="4.50" height="1.40" fill="#ffffff" opacity="0.42"/>
<circle cx="853.80" cy="118.40" r="1.40" fill="#070707"/><circle cx="853.80" cy="118.40" r="0.95" fill="#e4e4e4"/>
<rect x="855.50" y="120.85" width="62.80" height="4.50" fill="#3a3a3c" rx="0.9"/>
<rect x="856.10" y="121.80" width="61.60" height="2.60" fill="#575757" rx="0.5"/>
<rect x="859.40" y="122.40" width="5.00" height="1.40" fill="#ffffff" opacity="0.5"/>
<rect x="911.80" y="122.40" width="4.00" height="1.40" fill="#ffffff" opacity="0.42"/>
<circle cx="853.80" cy="123.10" r="1.40" fill="#070707"/><circle cx="853.80" cy="123.10" r="0.95" fill="#e4e4e4"/>
<rect x="855.50" y="125.75" width="62.80" height="4.50" fill="#3a3a3c" rx="0.9"/>
<rect x="856.10" y="126.70" width="61.60" height="2.60" fill="#575757" rx="0.5"/>
<rect x="858.40" y="127.30" width="11.00" height="1.40" fill="#ffffff" opacity="0.5"/>
<rect x="909.80" y="127.30" width="6.00" height="1.40" fill="#ffffff" opacity="0.42"/>
<circle cx="853.80" cy="128.00" r="1.40" fill="#070707"/><circle cx="853.80" cy="128.00" r="0.95" fill="#e4e4e4"/>
<rect x="855.50" y="130.75" width="62.80" height="4.50" fill="#3a3a3c" rx="0.9"/>
<rect x="856.10" y="131.70" width="61.60" height="2.60" fill="#575757" rx="0.5"/>
<rect x="858.40" y="132.30" width="5.00" height="1.40" fill="#ffffff" opacity="0.5"/>
<rect x="911.30" y="132.30" width="4.50" height="1.40" fill="#ffffff" opacity="0.42"/>
<circle cx="853.80" cy="133.00" r="1.40" fill="#070707"/><circle cx="853.80" cy="133.00" r="0.95" fill="#e4e4e4"/>
<rect x="855.50" y="134.95" width="62.80" height="4.50" fill="#3a3a3c" rx="0.9"/>
<rect x="856.10" y="135.90" width="61.60" height="2.60" fill="#575757" rx="0.5"/>
<rect x="859.40" y="136.50" width="5.00" height="1.40" fill="#ffffff" opacity="0.5"/>
<rect x="909.80" y="136.50" width="6.00" height="1.40" fill="#ffffff" opacity="0.42"/>
<circle cx="853.80" cy="137.20" r="1.40" fill="#070707"/><circle cx="853.80" cy="137.20" r="0.95" fill="#e4e4e4"/>
<rect x="855.50" y="139.75" width="62.80" height="4.50" fill="#3a3a3c" rx="0.9"/>
<rect x="856.10" y="140.70" width="61.60" height="2.60" fill="#575757" rx="0.5"/>
<rect x="858.40" y="141.30" width="5.00" height="1.40" fill="#ffffff" opacity="0.5"/>
<rect x="911.80" y="141.30" width="4.00" height="1.40" fill="#ffffff" opacity="0.42"/>
<circle cx="853.80" cy="142.00" r="1.40" fill="#070707"/><circle cx="853.80" cy="142.00" r="0.95" fill="#e4e4e4"/>
<rect x="855.50" y="144.75" width="62.80" height="4.50" fill="#3a3a3c" rx="0.9"/>
<rect x="856.10" y="145.70" width="61.60" height="2.60" fill="#575757" rx="0.5"/>
<rect x="858.40" y="146.30" width="7.00" height="1.40" fill="#ffffff" opacity="0.5"/>
<rect x="911.80" y="146.30" width="4.00" height="1.40" fill="#ffffff" opacity="0.42"/>
<circle cx="853.80" cy="147.00" r="1.40" fill="#070707"/><circle cx="853.80" cy="147.00" r="0.95" fill="#e4e4e4"/>
<rect x="855.50" y="148.95" width="62.80" height="4.50" fill="#3a3a3c" rx="0.9"/>
<rect x="856.10" y="149.90" width="61.60" height="2.60" fill="#575757" rx="0.5"/>
<rect x="859.40" y="150.50" width="13.00" height="1.40" fill="#ffffff" opacity="0.5"/>
<rect x="909.80" y="150.50" width="6.00" height="1.40" fill="#ffffff" opacity="0.42"/>
<circle cx="853.80" cy="151.20" r="1.40" fill="#070707"/><circle cx="853.80" cy="151.20" r="0.95" fill="#e4e4e4"/>
<rect x="855.50" y="153.85" width="62.80" height="4.50" fill="#3a3a3c" rx="0.9"/>
<rect x="856.10" y="154.80" width="61.60" height="2.60" fill="#575757" rx="0.5"/>
<rect x="858.40" y="155.40" width="5.00" height="1.40" fill="#ffffff" opacity="0.5"/>
<rect x="911.30" y="155.40" width="4.50" height="1.40" fill="#ffffff" opacity="0.42"/>
<circle cx="853.80" cy="156.10" r="1.40" fill="#070707"/><circle cx="853.80" cy="156.10" r="0.95" fill="#e4e4e4"/>
<rect x="855.50" y="158.85" width="62.80" height="4.50" fill="#3a3a3c" rx="0.9"/>
<rect x="856.10" y="159.80" width="61.60" height="2.60" fill="#575757" rx="0.5"/>
<rect x="856.10" y="159.80" width="1.90" height="2.60" fill="#4772b3" rx="0.4"/>
<rect x="858.40" y="160.40" width="5.00" height="1.40" fill="#ffffff" opacity="0.5"/>
<rect x="911.30" y="160.40" width="4.50" height="1.40" fill="#ffffff" opacity="0.42"/>
<circle cx="853.80" cy="161.10" r="1.40" fill="#070707"/><circle cx="853.80" cy="161.10" r="0.95" fill="#e4e4e4"/>
<rect x="855.50" y="163.05" width="62.80" height="4.50" fill="#3a3a3c" rx="0.9"/>
<rect x="856.10" y="164.00" width="61.60" height="2.60" fill="#575757" rx="0.5"/>
<rect x="856.10" y="164.00" width="35.90" height="2.60" fill="#4772b3" rx="0.4"/>
<rect x="859.40" y="164.60" width="9.00" height="1.40" fill="#ffffff" opacity="0.5"/>
<rect x="909.80" y="164.60" width="6.00" height="1.40" fill="#ffffff" opacity="0.42"/>
<circle cx="853.80" cy="165.30" r="1.40" fill="#070707"/><circle cx="853.80" cy="165.30" r="0.95" fill="#e4e4e4"/>
<rect x="855.50" y="167.75" width="62.80" height="4.50" fill="#3a3a3c" rx="0.9"/>
<rect x="856.10" y="168.70" width="61.60" height="2.60" fill="#575757" rx="0.5"/>
<rect x="858.40" y="169.30" width="7.00" height="1.40" fill="#ffffff" opacity="0.5"/>
<rect x="911.80" y="169.30" width="4.00" height="1.40" fill="#ffffff" opacity="0.42"/>
<circle cx="853.80" cy="170.00" r="1.40" fill="#070707"/><circle cx="853.80" cy="170.00" r="0.95" fill="#e4e4e4"/>
<rect x="855.50" y="172.75" width="62.80" height="4.50" fill="#3a3a3c" rx="0.9"/>
<rect x="856.10" y="173.70" width="61.60" height="2.60" fill="#575757" rx="0.5"/>
<rect x="858.40" y="174.30" width="13.00" height="1.40" fill="#ffffff" opacity="0.5"/>
<rect x="910.80" y="174.30" width="5.00" height="1.40" fill="#ffffff" opacity="0.42"/>
<circle cx="853.80" cy="175.00" r="1.40" fill="#070707"/><circle cx="853.80" cy="175.00" r="0.95" fill="#e4e4e4"/>
<rect x="855.50" y="177.75" width="62.80" height="4.50" fill="#3a3a3c" rx="0.9"/>
<rect x="856.10" y="178.70" width="61.60" height="2.60" fill="#575757" rx="0.5"/>
<rect x="859.40" y="179.30" width="13.00" height="1.40" fill="#ffffff" opacity="0.5"/>
<rect x="911.30" y="179.30" width="4.50" height="1.40" fill="#ffffff" opacity="0.42"/>
<circle cx="853.80" cy="180.00" r="1.40" fill="#070707"/><circle cx="853.80" cy="180.00" r="0.95" fill="#e4e4e4"/>
<rect x="855.50" y="181.75" width="62.80" height="4.50" fill="#3a3a3c" rx="0.9"/>
<rect x="856.10" y="182.70" width="61.60" height="2.60" fill="#575757" rx="0.5"/>
<rect x="858.40" y="183.30" width="5.00" height="1.40" fill="#ffffff" opacity="0.5"/>
<rect x="911.30" y="183.30" width="4.50" height="1.40" fill="#ffffff" opacity="0.42"/>
<circle cx="853.80" cy="184.00" r="1.40" fill="#070707"/><circle cx="853.80" cy="184.00" r="0.95" fill="#e4e4e4"/>
<rect x="855.50" y="186.75" width="62.80" height="4.50" fill="#3a3a3c" rx="0.9"/>
<rect x="856.10" y="187.70" width="61.60" height="2.60" fill="#575757" rx="0.5"/>
<rect x="858.40" y="188.30" width="9.00" height="1.40" fill="#ffffff" opacity="0.5"/>
<rect x="911.80" y="188.30" width="4.00" height="1.40" fill="#ffffff" opacity="0.42"/>
<circle cx="853.80" cy="189.00" r="1.40" fill="#070707"/><circle cx="853.80" cy="189.00" r="0.95" fill="#e4e4e4"/>
<rect x="855.50" y="191.75" width="62.80" height="4.50" fill="#3a3a3c" rx="0.9"/>
<rect x="856.10" y="192.70" width="61.60" height="2.60" fill="#575757" rx="0.5"/>
<rect x="859.40" y="193.30" width="13.00" height="1.40" fill="#ffffff" opacity="0.5"/>
<rect x="911.80" y="193.30" width="4.00" height="1.40" fill="#ffffff" opacity="0.42"/>
<circle cx="853.80" cy="194.00" r="1.40" fill="#070707"/><circle cx="853.80" cy="194.00" r="0.95" fill="#e4e4e4"/>
<rect x="855.50" y="195.75" width="62.80" height="4.50" fill="#3a3a3c" rx="0.9"/>
<rect x="856.10" y="196.70" width="61.60" height="2.60" fill="#575757" rx="0.5"/>
<rect x="858.40" y="197.30" width="13.00" height="1.40" fill="#ffffff" opacity="0.5"/>
<rect x="911.80" y="197.30" width="4.00" height="1.40" fill="#ffffff" opacity="0.42"/>
<circle cx="853.80" cy="198.00" r="1.40" fill="#070707"/><circle cx="853.80" cy="198.00" r="0.95" fill="#e4e4e4"/>
<rect x="855.50" y="200.75" width="62.80" height="4.50" fill="#3a3a3c" rx="0.9"/>
<rect x="856.10" y="201.70" width="61.60" height="2.60" fill="#575757" rx="0.5"/>
<rect x="856.10" y="201.70" width="1.90" height="2.60" fill="#4772b3" rx="0.4"/>
<rect x="858.40" y="202.30" width="13.00" height="1.40" fill="#ffffff" opacity="0.5"/>
<rect x="911.30" y="202.30" width="4.50" height="1.40" fill="#ffffff" opacity="0.42"/>
<circle cx="853.80" cy="203.00" r="1.40" fill="#070707"/><circle cx="853.80" cy="203.00" r="0.95" fill="#e4e4e4"/>
<rect x="855.50" y="205.75" width="62.80" height="4.50" fill="#3a3a3c" rx="0.9"/>
<rect x="856.10" y="206.70" width="61.60" height="2.60" fill="#575757" rx="0.5"/>
<rect x="859.40" y="207.30" width="11.00" height="1.40" fill="#ffffff" opacity="0.5"/>
<rect x="909.80" y="207.30" width="6.00" height="1.40" fill="#ffffff" opacity="0.42"/>
<circle cx="853.80" cy="208.00" r="1.40" fill="#070707"/><circle cx="853.80" cy="208.00" r="0.95" fill="#e4e4e4"/>
<rect x="855.50" y="209.75" width="62.80" height="4.50" fill="#3a3a3c" rx="0.9"/>
<rect x="856.10" y="210.70" width="61.60" height="2.60" fill="#575757" rx="0.5"/>
<rect x="858.40" y="211.30" width="17.00" height="1.40" fill="#ffffff" opacity="0.5"/>
<rect x="910.80" y="211.30" width="5.00" height="1.40" fill="#ffffff" opacity="0.42"/>
<circle cx="853.80" cy="212.00" r="1.40" fill="#070707"/><circle cx="853.80" cy="212.00" r="0.95" fill="#e4e4e4"/>
<rect x="855.50" y="214.75" width="62.80" height="4.50" fill="#3a3a3c" rx="0.9"/>
<rect x="856.10" y="215.70" width="61.60" height="2.60" fill="#575757" rx="0.5"/>
<rect x="858.40" y="216.30" width="11.00" height="1.40" fill="#ffffff" opacity="0.5"/>
<rect x="909.80" y="216.30" width="6.00" height="1.40" fill="#ffffff" opacity="0.42"/>
<circle cx="853.80" cy="217.00" r="1.40" fill="#070707"/><circle cx="853.80" cy="217.00" r="0.95" fill="#e4e4e4"/>
<rect x="855.50" y="219.75" width="62.80" height="4.50" fill="#3a3a3c" rx="0.9"/>
<rect x="856.10" y="220.70" width="61.60" height="2.60" fill="#575757" rx="0.5"/>
<rect x="859.40" y="221.30" width="9.00" height="1.40" fill="#ffffff" opacity="0.5"/>
<rect x="910.80" y="221.30" width="5.00" height="1.40" fill="#ffffff" opacity="0.42"/>
<circle cx="853.80" cy="222.00" r="1.40" fill="#070707"/><circle cx="853.80" cy="222.00" r="0.95" fill="#e4e4e4"/>
<rect x="855.50" y="224.75" width="62.80" height="4.50" fill="#3a3a3c" rx="0.9"/>
<rect x="856.10" y="225.70" width="61.60" height="2.60" fill="#575757" rx="0.5"/>
<rect x="856.10" y="225.70" width="6.40" height="2.60" fill="#4772b3" rx="0.4"/>
<rect x="858.40" y="226.30" width="7.00" height="1.40" fill="#ffffff" opacity="0.5"/>
<rect x="911.30" y="226.30" width="4.50" height="1.40" fill="#ffffff" opacity="0.42"/>
<circle cx="853.80" cy="227.00" r="1.40" fill="#070707"/><circle cx="853.80" cy="227.00" r="0.95" fill="#e4e4e4"/>
<rect x="855.50" y="228.75" width="62.80" height="4.50" fill="#3a3a3c" rx="0.9"/>
<rect x="856.10" y="229.70" width="61.60" height="2.60" fill="#575757" rx="0.5"/>
<rect x="858.40" y="230.30" width="15.00" height="1.40" fill="#ffffff" opacity="0.5"/>
<rect x="911.30" y="230.30" width="4.50" height="1.40" fill="#ffffff" opacity="0.42"/>
<circle cx="853.80" cy="231.00" r="1.40" fill="#070707"/><circle cx="853.80" cy="231.00" r="0.95" fill="#e4e4e4"/>
<rect x="855.50" y="233.75" width="62.80" height="4.50" fill="#3a3a3c" rx="0.9"/>
<rect x="856.10" y="234.70" width="61.60" height="2.60" fill="#575757" rx="0.5"/>
<rect x="859.40" y="235.30" width="5.00" height="1.40" fill="#ffffff" opacity="0.5"/>
<rect x="910.80" y="235.30" width="5.00" height="1.40" fill="#ffffff" opacity="0.42"/>
<circle cx="853.80" cy="236.00" r="1.40" fill="#070707"/><circle cx="853.80" cy="236.00" r="0.95" fill="#e4e4e4"/>
<rect x="855.50" y="238.75" width="62.80" height="4.50" fill="#3a3a3c" rx="0.9"/>
<rect x="856.10" y="239.70" width="61.60" height="2.60" fill="#575757" rx="0.5"/>
<rect x="858.40" y="240.30" width="13.00" height="1.40" fill="#ffffff" opacity="0.5"/>
<rect x="909.80" y="240.30" width="6.00" height="1.40" fill="#ffffff" opacity="0.42"/>
<circle cx="853.80" cy="241.00" r="1.40" fill="#070707"/><circle cx="853.80" cy="241.00" r="0.95" fill="#e4e4e4"/>
<rect x="855.50" y="242.75" width="62.80" height="4.50" fill="#3a3a3c" rx="0.9"/>
<rect x="856.10" y="243.70" width="61.60" height="2.60" fill="#575757" rx="0.5"/>
<rect x="856.10" y="243.70" width="13.90" height="2.60" fill="#4772b3" rx="0.4"/>
<rect x="858.40" y="244.30" width="9.00" height="1.40" fill="#ffffff" opacity="0.5"/>
<rect x="909.80" y="244.30" width="6.00" height="1.40" fill="#ffffff" opacity="0.42"/>
<circle cx="853.80" cy="245.00" r="1.40" fill="#070707"/><circle cx="853.80" cy="245.00" r="0.95" fill="#e4e4e4"/>
<rect x="855.50" y="247.75" width="62.80" height="4.50" fill="#3a3a3c" rx="0.9"/>
<rect x="856.10" y="248.70" width="61.60" height="2.60" fill="#575757" rx="0.5"/>
<rect x="859.40" y="249.30" width="9.00" height="1.40" fill="#ffffff" opacity="0.5"/>
<rect x="911.80" y="249.30" width="4.00" height="1.40" fill="#ffffff" opacity="0.42"/>
<circle cx="853.80" cy="250.00" r="1.40" fill="#070707"/><circle cx="853.80" cy="250.00" r="0.95" fill="#e4e4e4"/>
<rect x="855.50" y="252.75" width="62.80" height="4.50" fill="#3a3a3c" rx="0.9"/>
<rect x="856.10" y="253.70" width="61.60" height="2.60" fill="#575757" rx="0.5"/>
<rect x="858.40" y="254.30" width="5.00" height="1.40" fill="#ffffff" opacity="0.5"/>
<rect x="909.80" y="254.30" width="6.00" height="1.40" fill="#ffffff" opacity="0.42"/>
<circle cx="853.80" cy="255.00" r="1.40" fill="#070707"/><circle cx="853.80" cy="255.00" r="0.95" fill="#e4e4e4"/>
<rect x="855.50" y="256.75" width="62.80" height="4.50" fill="#3a3a3c" rx="0.9"/>
<rect x="856.10" y="257.70" width="61.60" height="2.60" fill="#575757" rx="0.5"/>
<rect x="858.40" y="258.30" width="7.00" height="1.40" fill="#ffffff" opacity="0.5"/>
<rect x="910.80" y="258.30" width="5.00" height="1.40" fill="#ffffff" opacity="0.42"/>
<circle cx="853.80" cy="259.00" r="1.40" fill="#070707"/><circle cx="853.80" cy="259.00" r="0.95" fill="#e4e4e4"/>
<rect x="855.50" y="261.75" width="62.80" height="4.50" fill="#3a3a3c" rx="0.9"/>
<rect x="856.10" y="262.70" width="61.60" height="2.60" fill="#575757" rx="0.5"/>
<rect x="859.40" y="263.30" width="7.00" height="1.40" fill="#ffffff" opacity="0.5"/>
<rect x="909.80" y="263.30" width="6.00" height="1.40" fill="#ffffff" opacity="0.42"/>
<circle cx="853.80" cy="264.00" r="1.40" fill="#070707"/><circle cx="853.80" cy="264.00" r="0.95" fill="#e4e4e4"/>
<circle cx="920.00" cy="83.20" r="1.40" fill="#070707"/><circle cx="920.00" cy="83.20" r="0.95" fill="#5fc95f"/>
<rect x="851.40" y="267.00" width="73.20" height="184.40" fill="#000" rx="1.5" opacity="0.28"/>
<rect x="852.30" y="267.40" width="71.40" height="182.50" fill="#000" rx="1.0" opacity="0.55"/>
<rect x="853.00" y="268.00" width="70.00" height="181.00" fill="#67677f"/>
<rect x="853.00" y="268.00" width="70.00" height="4.00" fill="#364d22"/>
<rect x="854.20" y="269.55" width="0.90" height="0.90" fill="#ffffff" opacity="0.7"/>
<rect x="857.50" y="269.10" width="10.00" height="1.60" fill="#ffffff" opacity="0.75"/>
<rect x="919.40" y="268.60" width="2.60" height="2.80" fill="#ffffff" rx="0.6" opacity="0.85"/>
<rect x="917.60" y="274.25" width="3.20" height="1.50" fill="#ffffff" opacity="0.7"/>
<rect x="854.60" y="279.50" width="66.80" height="4.00" fill="#1c1c1c" rx="0.7" stroke="#3a3a3a" stroke-width="0.3"/>
<rect x="855.00" y="280.40" width="2.20" height="2.20" fill="#e8e8e8" rx="1.1" opacity="0.9"/>
<rect x="861.60" y="280.80" width="8.00" height="1.40" fill="#ffffff" opacity="0.7"/>
<rect x="917.80" y="280.50" width="2.20" height="2.00" fill="#777" rx="0.3" opacity="0.8"/>
<rect x="855.60" y="286.15" width="6.00" height="1.50" fill="#ffffff" opacity="0.6"/>
<circle cx="853.00" cy="286.90" r="1.35" fill="#070707"/><circle cx="853.00" cy="286.90" r="0.9" fill="#c7c729"/>
<rect x="855.60" y="290.35" width="6.00" height="1.50" fill="#ffffff" opacity="0.6"/>
<circle cx="853.00" cy="291.10" r="1.35" fill="#070707"/><circle cx="853.00" cy="291.10" r="0.9" fill="#c7c729"/>
<rect x="855.60" y="295.35" width="6.00" height="1.50" fill="#ffffff" opacity="0.6"/>
<circle cx="853.00" cy="296.10" r="1.35" fill="#070707"/><circle cx="853.00" cy="296.10" r="0.9" fill="#c7c729"/>
<rect x="855.60" y="300.15" width="7.00" height="1.50" fill="#ffffff" opacity="0.6"/>
<circle cx="853.00" cy="300.90" r="1.35" fill="#070707"/><circle cx="853.00" cy="300.90" r="0.9" fill="#c7c729"/>
<text transform="translate(855.40,305.85) scale(0.208)" font-size="11" fill="#ffffff" fill-opacity="0.7">ノーマル</text>
<circle cx="853.00" cy="305.00" r="1.35" fill="#070707"/><circle cx="853.00" cy="305.00" r="0.9" fill="#6363c7"/>
<rect x="854.70" y="307.75" width="66.60" height="4.50" fill="#3a3a3c" rx="0.9"/>
<rect x="855.30" y="308.70" width="65.40" height="2.60" fill="#575757" rx="0.5"/>
<rect x="855.30" y="308.70" width="21.70" height="2.60" fill="#4772b3" rx="0.4"/>
<rect x="857.60" y="309.30" width="11.00" height="1.40" fill="#ffffff" opacity="0.5"/>
<rect x="914.80" y="309.30" width="4.00" height="1.40" fill="#ffffff" opacity="0.42"/>
<circle cx="853.00" cy="310.00" r="1.40" fill="#070707"/><circle cx="853.00" cy="310.00" r="0.95" fill="#e4e4e4"/>
<rect x="854.70" y="312.75" width="66.60" height="4.50" fill="#3a3a3c" rx="0.9"/>
<rect x="855.30" y="313.70" width="65.40" height="2.60" fill="#575757" rx="0.5"/>
<rect x="858.60" y="314.30" width="15.00" height="1.40" fill="#ffffff" opacity="0.5"/>
<rect x="914.80" y="314.30" width="4.00" height="1.40" fill="#ffffff" opacity="0.42"/>
<circle cx="853.00" cy="315.00" r="1.40" fill="#070707"/><circle cx="853.00" cy="315.00" r="0.95" fill="#e4e4e4"/>
<rect x="854.70" y="317.75" width="66.60" height="4.50" fill="#3a3a3c" rx="0.9"/>
<rect x="855.30" y="318.70" width="65.40" height="2.60" fill="#575757" rx="0.5"/>
<rect x="857.60" y="319.30" width="17.00" height="1.40" fill="#ffffff" opacity="0.5"/>
<rect x="913.80" y="319.30" width="5.00" height="1.40" fill="#ffffff" opacity="0.42"/>
<circle cx="853.00" cy="320.00" r="1.40" fill="#070707"/><circle cx="853.00" cy="320.00" r="0.95" fill="#e4e4e4"/>
<rect x="854.70" y="321.75" width="66.60" height="4.50" fill="#3a3a3c" rx="0.9"/>
<rect x="855.30" y="322.70" width="65.40" height="2.60" fill="#575757" rx="0.5"/>
<rect x="857.60" y="323.30" width="9.00" height="1.40" fill="#ffffff" opacity="0.5"/>
<rect x="913.80" y="323.30" width="5.00" height="1.40" fill="#ffffff" opacity="0.42"/>
<circle cx="853.00" cy="324.00" r="1.40" fill="#070707"/><circle cx="853.00" cy="324.00" r="0.95" fill="#e4e4e4"/>
<rect x="854.70" y="326.75" width="66.60" height="4.50" fill="#3a3a3c" rx="0.9"/>
<rect x="855.30" y="327.70" width="65.40" height="2.60" fill="#575757" rx="0.5"/>
<rect x="858.60" y="328.30" width="13.00" height="1.40" fill="#ffffff" opacity="0.5"/>
<rect x="912.80" y="328.30" width="6.00" height="1.40" fill="#ffffff" opacity="0.42"/>
<circle cx="853.00" cy="329.00" r="1.40" fill="#070707"/><circle cx="853.00" cy="329.00" r="0.95" fill="#e4e4e4"/>
<rect x="854.70" y="331.75" width="66.60" height="4.50" fill="#3a3a3c" rx="0.9"/>
<rect x="855.30" y="332.70" width="65.40" height="2.60" fill="#575757" rx="0.5"/>
<rect x="857.60" y="333.30" width="13.00" height="1.40" fill="#ffffff" opacity="0.5"/>
<rect x="912.80" y="333.30" width="6.00" height="1.40" fill="#ffffff" opacity="0.42"/>
<circle cx="853.00" cy="334.00" r="1.40" fill="#070707"/><circle cx="853.00" cy="334.00" r="0.95" fill="#e4e4e4"/>
<rect x="854.70" y="335.75" width="66.60" height="4.50" fill="#3a3a3c" rx="0.9"/>
<rect x="855.30" y="336.70" width="65.40" height="2.60" fill="#575757" rx="0.5"/>
<rect x="857.60" y="337.30" width="5.00" height="1.40" fill="#ffffff" opacity="0.5"/>
<rect x="914.80" y="337.30" width="4.00" height="1.40" fill="#ffffff" opacity="0.42"/>
<circle cx="853.00" cy="338.00" r="1.40" fill="#070707"/><circle cx="853.00" cy="338.00" r="0.95" fill="#e4e4e4"/>
<rect x="854.70" y="340.75" width="66.60" height="4.50" fill="#3a3a3c" rx="0.9"/>
<rect x="855.30" y="341.70" width="65.40" height="2.60" fill="#575757" rx="0.5"/>
<rect x="855.30" y="341.70" width="37.70" height="2.60" fill="#4772b3" rx="0.4"/>
<rect x="858.60" y="342.30" width="9.00" height="1.40" fill="#ffffff" opacity="0.5"/>
<rect x="912.80" y="342.30" width="6.00" height="1.40" fill="#ffffff" opacity="0.42"/>
<circle cx="853.00" cy="343.00" r="1.40" fill="#070707"/><circle cx="853.00" cy="343.00" r="0.95" fill="#e4e4e4"/>
<rect x="854.70" y="345.75" width="66.60" height="4.50" fill="#3a3a3c" rx="0.9"/>
<rect x="855.30" y="346.70" width="65.40" height="2.60" fill="#575757" rx="0.5"/>
<rect x="857.60" y="347.30" width="15.00" height="1.40" fill="#ffffff" opacity="0.5"/>
<rect x="914.80" y="347.30" width="4.00" height="1.40" fill="#ffffff" opacity="0.42"/>
<circle cx="853.00" cy="348.00" r="1.40" fill="#070707"/><circle cx="853.00" cy="348.00" r="0.95" fill="#e4e4e4"/>
<rect x="854.70" y="349.95" width="66.60" height="4.50" fill="#3a3a3c" rx="0.9"/>
<rect x="855.30" y="350.90" width="65.40" height="2.60" fill="#575757" rx="0.5"/>
<rect x="857.60" y="351.50" width="5.00" height="1.40" fill="#ffffff" opacity="0.5"/>
<rect x="913.80" y="351.50" width="5.00" height="1.40" fill="#ffffff" opacity="0.42"/>
<circle cx="853.00" cy="352.20" r="1.40" fill="#070707"/><circle cx="853.00" cy="352.20" r="0.95" fill="#e4e4e4"/>
<rect x="854.70" y="354.75" width="66.60" height="4.50" fill="#3a3a3c" rx="0.9"/>
<rect x="855.30" y="355.70" width="65.40" height="2.60" fill="#575757" rx="0.5"/>
<rect x="858.60" y="356.30" width="15.00" height="1.40" fill="#ffffff" opacity="0.5"/>
<rect x="912.80" y="356.30" width="6.00" height="1.40" fill="#ffffff" opacity="0.42"/>
<circle cx="853.00" cy="357.00" r="1.40" fill="#070707"/><circle cx="853.00" cy="357.00" r="0.95" fill="#e4e4e4"/>
<rect x="854.70" y="359.75" width="66.60" height="4.50" fill="#3a3a3c" rx="0.9"/>
<rect x="855.30" y="360.70" width="65.40" height="2.60" fill="#575757" rx="0.5"/>
<rect x="857.60" y="361.30" width="9.00" height="1.40" fill="#ffffff" opacity="0.5"/>
<rect x="912.80" y="361.30" width="6.00" height="1.40" fill="#ffffff" opacity="0.42"/>
<circle cx="853.00" cy="362.00" r="1.40" fill="#070707"/><circle cx="853.00" cy="362.00" r="0.95" fill="#e4e4e4"/>
<rect x="854.70" y="364.75" width="66.60" height="4.50" fill="#3a3a3c" rx="0.9"/>
<rect x="855.30" y="365.70" width="65.40" height="2.60" fill="#575757" rx="0.5"/>
<rect x="857.60" y="366.30" width="15.00" height="1.40" fill="#ffffff" opacity="0.5"/>
<rect x="913.80" y="366.30" width="5.00" height="1.40" fill="#ffffff" opacity="0.42"/>
<circle cx="853.00" cy="367.00" r="1.40" fill="#070707"/><circle cx="853.00" cy="367.00" r="0.95" fill="#e4e4e4"/>
<rect x="854.70" y="368.75" width="66.60" height="4.50" fill="#3a3a3c" rx="0.9"/>
<rect x="855.30" y="369.70" width="65.40" height="2.60" fill="#575757" rx="0.5"/>
<rect x="858.60" y="370.30" width="5.00" height="1.40" fill="#ffffff" opacity="0.5"/>
<rect x="912.80" y="370.30" width="6.00" height="1.40" fill="#ffffff" opacity="0.42"/>
<circle cx="853.00" cy="371.00" r="1.40" fill="#070707"/><circle cx="853.00" cy="371.00" r="0.95" fill="#e4e4e4"/>
<rect x="854.70" y="373.75" width="66.60" height="4.50" fill="#3a3a3c" rx="0.9"/>
<rect x="855.30" y="374.70" width="65.40" height="2.60" fill="#575757" rx="0.5"/>
<rect x="857.60" y="375.30" width="9.00" height="1.40" fill="#ffffff" opacity="0.5"/>
<rect x="914.30" y="375.30" width="4.50" height="1.40" fill="#ffffff" opacity="0.42"/>
<circle cx="853.00" cy="376.00" r="1.40" fill="#070707"/><circle cx="853.00" cy="376.00" r="0.95" fill="#e4e4e4"/>
<rect x="854.70" y="378.65" width="66.60" height="4.50" fill="#3a3a3c" rx="0.9"/>
<rect x="855.30" y="379.60" width="65.40" height="2.60" fill="#575757" rx="0.5"/>
<rect x="855.30" y="379.60" width="2.70" height="2.60" fill="#4772b3" rx="0.4"/>
<rect x="857.60" y="380.20" width="13.00" height="1.40" fill="#ffffff" opacity="0.5"/>
<rect x="914.80" y="380.20" width="4.00" height="1.40" fill="#ffffff" opacity="0.42"/>
<circle cx="853.00" cy="380.90" r="1.40" fill="#070707"/><circle cx="853.00" cy="380.90" r="0.95" fill="#e4e4e4"/>
<rect x="854.70" y="382.75" width="66.60" height="4.50" fill="#3a3a3c" rx="0.9"/>
<rect x="855.30" y="383.70" width="65.40" height="2.60" fill="#575757" rx="0.5"/>
<rect x="858.60" y="384.30" width="11.00" height="1.40" fill="#ffffff" opacity="0.5"/>
<rect x="914.80" y="384.30" width="4.00" height="1.40" fill="#ffffff" opacity="0.42"/>
<circle cx="853.00" cy="385.00" r="1.40" fill="#070707"/><circle cx="853.00" cy="385.00" r="0.95" fill="#e4e4e4"/>
<rect x="854.70" y="387.75" width="66.60" height="4.50" fill="#3a3a3c" rx="0.9"/>
<rect x="855.30" y="388.70" width="65.40" height="2.60" fill="#575757" rx="0.5"/>
<rect x="857.60" y="389.30" width="7.00" height="1.40" fill="#ffffff" opacity="0.5"/>
<rect x="913.80" y="389.30" width="5.00" height="1.40" fill="#ffffff" opacity="0.42"/>
<circle cx="853.00" cy="390.00" r="1.40" fill="#070707"/><circle cx="853.00" cy="390.00" r="0.95" fill="#e4e4e4"/>
<rect x="854.70" y="392.75" width="66.60" height="4.50" fill="#3a3a3c" rx="0.9"/>
<rect x="855.30" y="393.70" width="65.40" height="2.60" fill="#575757" rx="0.5"/>
<rect x="857.60" y="394.30" width="7.00" height="1.40" fill="#ffffff" opacity="0.5"/>
<rect x="914.30" y="394.30" width="4.50" height="1.40" fill="#ffffff" opacity="0.42"/>
<circle cx="853.00" cy="395.00" r="1.40" fill="#070707"/><circle cx="853.00" cy="395.00" r="0.95" fill="#e4e4e4"/>
<rect x="854.70" y="396.75" width="66.60" height="4.50" fill="#3a3a3c" rx="0.9"/>
<rect x="855.30" y="397.70" width="65.40" height="2.60" fill="#575757" rx="0.5"/>
<rect x="858.60" y="398.30" width="11.00" height="1.40" fill="#ffffff" opacity="0.5"/>
<rect x="912.80" y="398.30" width="6.00" height="1.40" fill="#ffffff" opacity="0.42"/>
<circle cx="853.00" cy="399.00" r="1.40" fill="#070707"/><circle cx="853.00" cy="399.00" r="0.95" fill="#e4e4e4"/>
<rect x="854.70" y="401.75" width="66.60" height="4.50" fill="#3a3a3c" rx="0.9"/>
<rect x="855.30" y="402.70" width="65.40" height="2.60" fill="#575757" rx="0.5"/>
<rect x="855.30" y="402.70" width="2.70" height="2.60" fill="#4772b3" rx="0.4"/>
<rect x="857.60" y="403.30" width="17.00" height="1.40" fill="#ffffff" opacity="0.5"/>
<rect x="912.80" y="403.30" width="6.00" height="1.40" fill="#ffffff" opacity="0.42"/>
<circle cx="853.00" cy="404.00" r="1.40" fill="#070707"/><circle cx="853.00" cy="404.00" r="0.95" fill="#e4e4e4"/>
<rect x="854.70" y="406.75" width="66.60" height="4.50" fill="#3a3a3c" rx="0.9"/>
<rect x="855.30" y="407.70" width="65.40" height="2.60" fill="#575757" rx="0.5"/>
<rect x="857.60" y="408.30" width="5.00" height="1.40" fill="#ffffff" opacity="0.5"/>
<rect x="914.30" y="408.30" width="4.50" height="1.40" fill="#ffffff" opacity="0.42"/>
<circle cx="853.00" cy="409.00" r="1.40" fill="#070707"/><circle cx="853.00" cy="409.00" r="0.95" fill="#e4e4e4"/>
<rect x="854.70" y="411.75" width="66.60" height="4.50" fill="#3a3a3c" rx="0.9"/>
<rect x="855.30" y="412.70" width="65.40" height="2.60" fill="#575757" rx="0.5"/>
<rect x="858.60" y="413.30" width="11.00" height="1.40" fill="#ffffff" opacity="0.5"/>
<rect x="912.80" y="413.30" width="6.00" height="1.40" fill="#ffffff" opacity="0.42"/>
<circle cx="853.00" cy="414.00" r="1.40" fill="#070707"/><circle cx="853.00" cy="414.00" r="0.95" fill="#e4e4e4"/>
<rect x="854.70" y="415.75" width="66.60" height="4.50" fill="#3a3a3c" rx="0.9"/>
<rect x="855.30" y="416.70" width="65.40" height="2.60" fill="#575757" rx="0.5"/>
<rect x="857.60" y="417.30" width="13.00" height="1.40" fill="#ffffff" opacity="0.5"/>
<rect x="913.80" y="417.30" width="5.00" height="1.40" fill="#ffffff" opacity="0.42"/>
<circle cx="853.00" cy="418.00" r="1.40" fill="#070707"/><circle cx="853.00" cy="418.00" r="0.95" fill="#e4e4e4"/>
<rect x="854.70" y="420.75" width="66.60" height="4.50" fill="#3a3a3c" rx="0.9"/>
<rect x="855.30" y="421.70" width="65.40" height="2.60" fill="#575757" rx="0.5"/>
<rect x="855.30" y="421.70" width="4.20" height="2.60" fill="#4772b3" rx="0.4"/>
<rect x="857.60" y="422.30" width="7.00" height="1.40" fill="#ffffff" opacity="0.5"/>
<rect x="912.80" y="422.30" width="6.00" height="1.40" fill="#ffffff" opacity="0.42"/>
<circle cx="853.00" cy="423.00" r="1.40" fill="#070707"/><circle cx="853.00" cy="423.00" r="0.95" fill="#e4e4e4"/>
<rect x="854.70" y="425.75" width="66.60" height="4.50" fill="#3a3a3c" rx="0.9"/>
<rect x="855.30" y="426.70" width="65.40" height="2.60" fill="#575757" rx="0.5"/>
<rect x="858.60" y="427.30" width="17.00" height="1.40" fill="#ffffff" opacity="0.5"/>
<rect x="913.80" y="427.30" width="5.00" height="1.40" fill="#ffffff" opacity="0.42"/>
<circle cx="853.00" cy="428.00" r="1.40" fill="#070707"/><circle cx="853.00" cy="428.00" r="0.95" fill="#e4e4e4"/>
<rect x="854.70" y="430.05" width="66.60" height="4.50" fill="#3a3a3c" rx="0.9"/>
<rect x="855.30" y="431.00" width="65.40" height="2.60" fill="#575757" rx="0.5"/>
<rect x="857.60" y="431.60" width="15.00" height="1.40" fill="#ffffff" opacity="0.5"/>
<rect x="912.80" y="431.60" width="6.00" height="1.40" fill="#ffffff" opacity="0.42"/>
<circle cx="853.00" cy="432.30" r="1.40" fill="#070707"/><circle cx="853.00" cy="432.30" r="0.95" fill="#e4e4e4"/>
<rect x="854.70" y="434.75" width="66.60" height="4.50" fill="#3a3a3c" rx="0.9"/>
<rect x="855.30" y="435.70" width="65.40" height="2.60" fill="#575757" rx="0.5"/>
<rect x="857.60" y="436.30" width="9.00" height="1.40" fill="#ffffff" opacity="0.5"/>
<rect x="912.80" y="436.30" width="6.00" height="1.40" fill="#ffffff" opacity="0.42"/>
<circle cx="853.00" cy="437.00" r="1.40" fill="#070707"/><circle cx="853.00" cy="437.00" r="0.95" fill="#e4e4e4"/>
<rect x="854.70" y="439.85" width="66.60" height="4.50" fill="#3a3a3c" rx="0.9"/>
<rect x="855.30" y="440.80" width="65.40" height="2.60" fill="#575757" rx="0.5"/>
<rect x="858.60" y="441.40" width="7.00" height="1.40" fill="#ffffff" opacity="0.5"/>
<rect x="914.30" y="441.40" width="4.50" height="1.40" fill="#ffffff" opacity="0.42"/>
<circle cx="853.00" cy="442.10" r="1.40" fill="#070707"/><circle cx="853.00" cy="442.10" r="0.95" fill="#e4e4e4"/>
<rect x="854.70" y="444.05" width="66.60" height="4.50" fill="#3a3a3c" rx="0.9"/>
<rect x="855.30" y="445.00" width="65.40" height="2.60" fill="#575757" rx="0.5"/>
<rect x="857.60" y="445.60" width="5.00" height="1.40" fill="#ffffff" opacity="0.5"/>
<rect x="914.30" y="445.60" width="4.50" height="1.40" fill="#ffffff" opacity="0.42"/>
<circle cx="853.00" cy="446.30" r="1.40" fill="#070707"/><circle cx="853.00" cy="446.30" r="0.95" fill="#e4e4e4"/>
<circle cx="923.00" cy="275.00" r="1.40" fill="#070707"/><circle cx="923.00" cy="275.00" r="0.95" fill="#5fc95f"/>
<rect x="851.40" y="627.00" width="71.20" height="59.20" fill="#000" rx="1.5" opacity="0.28"/>
<rect x="852.30" y="627.40" width="69.40" height="57.30" fill="#000" rx="1.0" opacity="0.55"/>
<rect x="853.00" y="628.00" width="68.00" height="55.80" fill="#67677f"/>
<rect x="915.60" y="629.55" width="3.20" height="1.50" fill="#ffffff" opacity="0.7"/>
<rect x="854.60" y="635.00" width="64.80" height="4.00" fill="#1c1c1c" rx="0.7" stroke="#3a3a3a" stroke-width="0.3"/>
<rect x="855.00" y="635.90" width="2.20" height="2.20" fill="#e8e8e8" rx="1.1" opacity="0.9"/>
<rect x="861.60" y="636.30" width="8.00" height="1.40" fill="#ffffff" opacity="0.7"/>
<rect x="915.80" y="636.00" width="2.20" height="2.00" fill="#777" rx="0.3" opacity="0.8"/>
<rect x="855.60" y="641.25" width="6.00" height="1.50" fill="#ffffff" opacity="0.6"/>
<circle cx="853.00" cy="642.00" r="1.35" fill="#070707"/><circle cx="853.00" cy="642.00" r="0.9" fill="#c7c729"/>
<rect x="854.70" y="644.75" width="64.60" height="4.50" fill="#3a3a3c" rx="0.9"/>
<rect x="855.30" y="645.70" width="63.40" height="2.60" fill="#575757" rx="0.5"/>
<rect x="857.60" y="646.30" width="7.00" height="1.40" fill="#ffffff" opacity="0.5"/>
<rect x="912.30" y="646.30" width="4.50" height="1.40" fill="#ffffff" opacity="0.42"/>
<circle cx="853.00" cy="647.00" r="1.40" fill="#070707"/><circle cx="853.00" cy="647.00" r="0.95" fill="#e4e4e4"/>
<rect x="854.70" y="649.75" width="64.60" height="4.50" fill="#3a3a3c" rx="0.9"/>
<rect x="855.30" y="650.70" width="63.40" height="2.60" fill="#575757" rx="0.5"/>
<rect x="858.60" y="651.30" width="15.00" height="1.40" fill="#ffffff" opacity="0.5"/>
<rect x="912.30" y="651.30" width="4.50" height="1.40" fill="#ffffff" opacity="0.42"/>
<circle cx="853.00" cy="652.00" r="1.40" fill="#070707"/><circle cx="853.00" cy="652.00" r="0.95" fill="#e4e4e4"/>
<rect x="854.70" y="654.15" width="64.60" height="4.50" fill="#3a3a3c" rx="0.9"/>
<rect x="855.30" y="655.10" width="63.40" height="2.60" fill="#575757" rx="0.5"/>
<rect x="855.30" y="655.10" width="20.70" height="2.60" fill="#4772b3" rx="0.4"/>
<rect x="857.60" y="655.70" width="5.00" height="1.40" fill="#ffffff" opacity="0.5"/>
<rect x="910.80" y="655.70" width="6.00" height="1.40" fill="#ffffff" opacity="0.42"/>
<circle cx="853.00" cy="656.40" r="1.40" fill="#070707"/><circle cx="853.00" cy="656.40" r="0.95" fill="#e4e4e4"/>
<rect x="854.70" y="658.75" width="64.60" height="4.50" fill="#3a3a3c" rx="0.9"/>
<rect x="855.30" y="659.70" width="63.40" height="2.60" fill="#575757" rx="0.5"/>
<rect x="855.30" y="659.70" width="23.70" height="2.60" fill="#4772b3" rx="0.4"/>
<rect x="857.60" y="660.30" width="17.00" height="1.40" fill="#ffffff" opacity="0.5"/>
<rect x="912.30" y="660.30" width="4.50" height="1.40" fill="#ffffff" opacity="0.42"/>
<circle cx="853.00" cy="661.00" r="1.40" fill="#070707"/><circle cx="853.00" cy="661.00" r="0.95" fill="#e4e4e4"/>
<rect x="854.70" y="663.75" width="64.60" height="4.50" fill="#3a3a3c" rx="0.9"/>
<rect x="855.30" y="664.70" width="63.40" height="2.60" fill="#575757" rx="0.5"/>
<rect x="858.60" y="665.30" width="9.00" height="1.40" fill="#ffffff" opacity="0.5"/>
<rect x="911.80" y="665.30" width="5.00" height="1.40" fill="#ffffff" opacity="0.42"/>
<circle cx="853.00" cy="666.00" r="1.40" fill="#070707"/><circle cx="853.00" cy="666.00" r="0.95" fill="#e4e4e4"/>
<rect x="854.70" y="668.75" width="64.60" height="4.50" fill="#3a3a3c" rx="0.9"/>
<rect x="855.30" y="669.70" width="63.40" height="2.60" fill="#575757" rx="0.5"/>
<rect x="857.60" y="670.30" width="5.00" height="1.40" fill="#ffffff" opacity="0.5"/>
<rect x="912.30" y="670.30" width="4.50" height="1.40" fill="#ffffff" opacity="0.42"/>
<circle cx="853.00" cy="671.00" r="1.40" fill="#070707"/><circle cx="853.00" cy="671.00" r="0.95" fill="#e4e4e4"/>
<rect x="854.70" y="672.95" width="64.60" height="4.50" fill="#3a3a3c" rx="0.9"/>
<rect x="855.30" y="673.90" width="63.40" height="2.60" fill="#575757" rx="0.5"/>
<rect x="857.60" y="674.50" width="11.00" height="1.40" fill="#ffffff" opacity="0.5"/>
<rect x="911.80" y="674.50" width="5.00" height="1.40" fill="#ffffff" opacity="0.42"/>
<circle cx="853.00" cy="675.20" r="1.40" fill="#070707"/><circle cx="853.00" cy="675.20" r="0.95" fill="#e4e4e4"/>
<rect x="854.70" y="677.75" width="64.60" height="4.50" fill="#3a3a3c" rx="0.9"/>
<rect x="855.30" y="678.70" width="63.40" height="2.60" fill="#575757" rx="0.5"/>
<rect x="858.60" y="679.30" width="13.00" height="1.40" fill="#ffffff" opacity="0.5"/>
<rect x="911.80" y="679.30" width="5.00" height="1.40" fill="#ffffff" opacity="0.42"/>
<circle cx="853.00" cy="680.00" r="1.40" fill="#070707"/><circle cx="853.00" cy="680.00" r="0.95" fill="#e4e4e4"/>
<circle cx="921.00" cy="630.30" r="1.40" fill="#070707"/><circle cx="921.00" cy="630.30" r="0.95" fill="#5fc95f"/>
<rect x="851.40" y="683.80" width="71.20" height="85.60" fill="#000" rx="1.5" opacity="0.28"/>
<rect x="852.30" y="684.20" width="69.40" height="83.70" fill="#000" rx="1.0" opacity="0.55"/>
<rect x="853.00" y="684.80" width="68.00" height="82.20" fill="#67677f"/>
<rect x="853.00" y="684.80" width="68.00" height="4.10" fill="#364d22"/>
<rect x="854.20" y="686.40" width="0.90" height="0.90" fill="#ffffff" opacity="0.7"/>
<rect x="857.50" y="685.95" width="10.00" height="1.60" fill="#ffffff" opacity="0.75"/>
<rect x="917.40" y="685.40" width="2.60" height="2.90" fill="#ffffff" rx="0.6" opacity="0.85"/>
<rect x="915.60" y="690.95" width="3.20" height="1.50" fill="#ffffff" opacity="0.7"/>
<rect x="854.60" y="696.00" width="64.80" height="4.00" fill="#1c1c1c" rx="0.7" stroke="#3a3a3a" stroke-width="0.3"/>
<rect x="855.00" y="696.90" width="2.20" height="2.20" fill="#e8e8e8" rx="1.1" opacity="0.9"/>
<rect x="861.60" y="697.30" width="8.00" height="1.40" fill="#ffffff" opacity="0.7"/>
<rect x="915.80" y="697.00" width="2.20" height="2.00" fill="#777" rx="0.3" opacity="0.8"/>
<rect x="855.60" y="702.25" width="5.00" height="1.50" fill="#ffffff" opacity="0.6"/>
<circle cx="853.00" cy="703.00" r="1.35" fill="#070707"/><circle cx="853.00" cy="703.00" r="0.9" fill="#c7c729"/>
<text transform="translate(855.40,708.85) scale(0.208)" font-size="11" fill="#ffffff" fill-opacity="0.7">ノーマル</text>
<circle cx="853.00" cy="708.00" r="1.35" fill="#070707"/><circle cx="853.00" cy="708.00" r="0.9" fill="#6363c7"/>
<rect x="854.70" y="710.75" width="64.60" height="4.50" fill="#3a3a3c" rx="0.9"/>
<rect x="855.30" y="711.70" width="63.40" height="2.60" fill="#575757" rx="0.5"/>
<rect x="855.30" y="711.70" width="26.70" height="2.60" fill="#4772b3" rx="0.4"/>
<rect x="857.60" y="712.30" width="7.00" height="1.40" fill="#ffffff" opacity="0.5"/>
<rect x="912.80" y="712.30" width="4.00" height="1.40" fill="#ffffff" opacity="0.42"/>
<circle cx="853.00" cy="713.00" r="1.40" fill="#070707"/><circle cx="853.00" cy="713.00" r="0.95" fill="#e4e4e4"/>
<rect x="854.70" y="715.75" width="64.60" height="4.50" fill="#3a3a3c" rx="0.9"/>
<rect x="855.30" y="716.70" width="63.40" height="2.60" fill="#575757" rx="0.5"/>
<rect x="858.60" y="717.30" width="11.00" height="1.40" fill="#ffffff" opacity="0.5"/>
<rect x="910.80" y="717.30" width="6.00" height="1.40" fill="#ffffff" opacity="0.42"/>
<circle cx="853.00" cy="718.00" r="1.40" fill="#070707"/><circle cx="853.00" cy="718.00" r="0.95" fill="#e4e4e4"/>
<rect x="854.70" y="719.75" width="64.60" height="4.50" fill="#3a3a3c" rx="0.9"/>
<rect x="855.30" y="720.70" width="63.40" height="2.60" fill="#575757" rx="0.5"/>
<rect x="857.60" y="721.30" width="11.00" height="1.40" fill="#ffffff" opacity="0.5"/>
<rect x="910.80" y="721.30" width="6.00" height="1.40" fill="#ffffff" opacity="0.42"/>
<circle cx="853.00" cy="722.00" r="1.40" fill="#070707"/><circle cx="853.00" cy="722.00" r="0.95" fill="#e4e4e4"/>
<rect x="854.70" y="724.75" width="64.60" height="4.50" fill="#3a3a3c" rx="0.9"/>
<rect x="855.30" y="725.70" width="63.40" height="2.60" fill="#575757" rx="0.5"/>
<rect x="857.60" y="726.30" width="11.00" height="1.40" fill="#ffffff" opacity="0.5"/>
<rect x="912.80" y="726.30" width="4.00" height="1.40" fill="#ffffff" opacity="0.42"/>
<circle cx="853.00" cy="727.00" r="1.40" fill="#070707"/><circle cx="853.00" cy="727.00" r="0.95" fill="#e4e4e4"/>
<rect x="854.70" y="729.75" width="64.60" height="4.50" fill="#3a3a3c" rx="0.9"/>
<rect x="855.30" y="730.70" width="63.40" height="2.60" fill="#575757" rx="0.5"/>
<rect x="858.60" y="731.30" width="11.00" height="1.40" fill="#ffffff" opacity="0.5"/>
<rect x="910.80" y="731.30" width="6.00" height="1.40" fill="#ffffff" opacity="0.42"/>
<circle cx="853.00" cy="732.00" r="1.40" fill="#070707"/><circle cx="853.00" cy="732.00" r="0.95" fill="#e4e4e4"/>
<rect x="854.70" y="733.75" width="64.60" height="4.50" fill="#3a3a3c" rx="0.9"/>
<rect x="855.30" y="734.70" width="63.40" height="2.60" fill="#575757" rx="0.5"/>
<rect x="857.60" y="735.30" width="5.00" height="1.40" fill="#ffffff" opacity="0.5"/>
<rect x="912.30" y="735.30" width="4.50" height="1.40" fill="#ffffff" opacity="0.42"/>
<circle cx="853.00" cy="736.00" r="1.40" fill="#070707"/><circle cx="853.00" cy="736.00" r="0.95" fill="#e4e4e4"/>
<rect x="854.70" y="738.75" width="64.60" height="4.50" fill="#3a3a3c" rx="0.9"/>
<rect x="855.30" y="739.70" width="63.40" height="2.60" fill="#575757" rx="0.5"/>
<rect x="857.60" y="740.30" width="5.00" height="1.40" fill="#ffffff" opacity="0.5"/>
<rect x="912.30" y="740.30" width="4.50" height="1.40" fill="#ffffff" opacity="0.42"/>
<circle cx="853.00" cy="741.00" r="1.40" fill="#070707"/><circle cx="853.00" cy="741.00" r="0.95" fill="#e4e4e4"/>
<rect x="854.70" y="743.75" width="64.60" height="4.50" fill="#3a3a3c" rx="0.9"/>
<rect x="855.30" y="744.70" width="63.40" height="2.60" fill="#575757" rx="0.5"/>
<rect x="858.60" y="745.30" width="11.00" height="1.40" fill="#ffffff" opacity="0.5"/>
<rect x="912.30" y="745.30" width="4.50" height="1.40" fill="#ffffff" opacity="0.42"/>
<circle cx="853.00" cy="746.00" r="1.40" fill="#070707"/><circle cx="853.00" cy="746.00" r="0.95" fill="#e4e4e4"/>
<rect x="854.70" y="747.75" width="64.60" height="4.50" fill="#3a3a3c" rx="0.9"/>
<rect x="855.30" y="748.70" width="63.40" height="2.60" fill="#575757" rx="0.5"/>
<rect x="857.60" y="749.30" width="5.00" height="1.40" fill="#ffffff" opacity="0.5"/>
<rect x="911.80" y="749.30" width="5.00" height="1.40" fill="#ffffff" opacity="0.42"/>
<circle cx="853.00" cy="750.00" r="1.40" fill="#070707"/><circle cx="853.00" cy="750.00" r="0.95" fill="#e4e4e4"/>
<rect x="854.70" y="752.75" width="64.60" height="4.50" fill="#3a3a3c" rx="0.9"/>
<rect x="855.30" y="753.70" width="63.40" height="2.60" fill="#575757" rx="0.5"/>
<rect x="857.60" y="754.30" width="13.00" height="1.40" fill="#ffffff" opacity="0.5"/>
<rect x="912.80" y="754.30" width="4.00" height="1.40" fill="#ffffff" opacity="0.42"/>
<circle cx="853.00" cy="755.00" r="1.40" fill="#070707"/><circle cx="853.00" cy="755.00" r="0.95" fill="#e4e4e4"/>
<rect x="854.70" y="757.75" width="64.60" height="4.50" fill="#3a3a3c" rx="0.9"/>
<rect x="855.30" y="758.70" width="63.40" height="2.60" fill="#575757" rx="0.5"/>
<rect x="855.30" y="758.70" width="16.70" height="2.60" fill="#4772b3" rx="0.4"/>
<rect x="858.60" y="759.30" width="5.00" height="1.40" fill="#ffffff" opacity="0.5"/>
<rect x="912.80" y="759.30" width="4.00" height="1.40" fill="#ffffff" opacity="0.42"/>
<circle cx="853.00" cy="760.00" r="1.40" fill="#070707"/><circle cx="853.00" cy="760.00" r="0.95" fill="#e4e4e4"/>
<rect x="854.70" y="762.75" width="64.60" height="4.50" fill="#3a3a3c" rx="0.9"/>
<rect x="855.30" y="763.70" width="63.40" height="2.60" fill="#575757" rx="0.5"/>
<rect x="857.60" y="764.30" width="13.00" height="1.40" fill="#ffffff" opacity="0.5"/>
<rect x="912.30" y="764.30" width="4.50" height="1.40" fill="#ffffff" opacity="0.42"/>
<circle cx="853.00" cy="765.00" r="1.40" fill="#070707"/><circle cx="853.00" cy="765.00" r="0.95" fill="#e4e4e4"/>
<circle cx="921.00" cy="691.70" r="1.40" fill="#070707"/><circle cx="921.00" cy="691.70" r="0.95" fill="#5fc95f"/>
<rect x="851.40" y="768.80" width="69.90" height="52.60" fill="#000" rx="1.5" opacity="0.28"/>
<rect x="852.30" y="769.20" width="68.10" height="50.70" fill="#000" rx="1.0" opacity="0.55"/>
<rect x="853.00" y="769.80" width="66.70" height="49.20" fill="#67677f"/>
<rect x="853.00" y="769.80" width="66.70" height="4.00" fill="#364d22"/>
<rect x="854.20" y="771.35" width="0.90" height="0.90" fill="#ffffff" opacity="0.7"/>
<rect x="857.50" y="770.90" width="10.00" height="1.60" fill="#ffffff" opacity="0.75"/>
<rect x="916.10" y="770.40" width="2.60" height="2.80" fill="#ffffff" rx="0.6" opacity="0.85"/>
<rect x="914.30" y="776.25" width="3.20" height="1.50" fill="#ffffff" opacity="0.7"/>
<rect x="854.60" y="781.00" width="63.50" height="4.00" fill="#1c1c1c" rx="0.7" stroke="#3a3a3a" stroke-width="0.3"/>
<rect x="855.00" y="781.90" width="2.20" height="2.20" fill="#e8e8e8" rx="1.1" opacity="0.9"/>
<rect x="861.60" y="782.30" width="8.00" height="1.40" fill="#ffffff" opacity="0.7"/>
<rect x="914.50" y="782.00" width="2.20" height="2.00" fill="#777" rx="0.3" opacity="0.8"/>
<rect x="855.60" y="788.25" width="6.00" height="1.50" fill="#ffffff" opacity="0.6"/>
<circle cx="853.00" cy="789.00" r="1.35" fill="#070707"/><circle cx="853.00" cy="789.00" r="0.9" fill="#c7c729"/>
<rect x="854.70" y="790.75" width="63.30" height="4.50" fill="#3a3a3c" rx="0.9"/>
<rect x="855.30" y="791.70" width="62.10" height="2.60" fill="#575757" rx="0.5"/>
<rect x="855.30" y="791.70" width="2.00" height="2.60" fill="#4772b3" rx="0.4"/>
<rect x="857.60" y="792.30" width="13.00" height="1.40" fill="#ffffff" opacity="0.5"/>
<rect x="911.50" y="792.30" width="4.00" height="1.40" fill="#ffffff" opacity="0.42"/>
<circle cx="853.00" cy="793.00" r="1.40" fill="#070707"/><circle cx="853.00" cy="793.00" r="0.95" fill="#e4e4e4"/>
<rect x="854.70" y="795.75" width="63.30" height="4.50" fill="#3a3a3c" rx="0.9"/>
<rect x="855.30" y="796.70" width="62.10" height="2.60" fill="#575757" rx="0.5"/>
<rect x="855.30" y="796.70" width="2.00" height="2.60" fill="#4772b3" rx="0.4"/>
<rect x="858.60" y="797.30" width="9.00" height="1.40" fill="#ffffff" opacity="0.5"/>
<rect x="911.50" y="797.30" width="4.00" height="1.40" fill="#ffffff" opacity="0.42"/>
<circle cx="853.00" cy="798.00" r="1.40" fill="#070707"/><circle cx="853.00" cy="798.00" r="0.95" fill="#e4e4e4"/>
<rect x="854.70" y="800.75" width="63.30" height="4.50" fill="#3a3a3c" rx="0.9"/>
<rect x="855.30" y="801.70" width="62.10" height="2.60" fill="#575757" rx="0.5"/>
<rect x="855.30" y="801.70" width="41.70" height="2.60" fill="#4772b3" rx="0.4"/>
<rect x="857.60" y="802.30" width="5.00" height="1.40" fill="#ffffff" opacity="0.5"/>
<rect x="911.00" y="802.30" width="4.50" height="1.40" fill="#ffffff" opacity="0.42"/>
<circle cx="853.00" cy="803.00" r="1.40" fill="#070707"/><circle cx="853.00" cy="803.00" r="0.95" fill="#e4e4e4"/>
<rect x="854.70" y="804.75" width="63.30" height="4.50" fill="#3a3a3c" rx="0.9"/>
<rect x="855.30" y="805.70" width="62.10" height="2.60" fill="#575757" rx="0.5"/>
<rect x="857.60" y="806.30" width="13.00" height="1.40" fill="#ffffff" opacity="0.5"/>
<rect x="909.50" y="806.30" width="6.00" height="1.40" fill="#ffffff" opacity="0.42"/>
<circle cx="853.00" cy="807.00" r="1.40" fill="#070707"/><circle cx="853.00" cy="807.00" r="0.95" fill="#e4e4e4"/>
<rect x="854.70" y="809.75" width="63.30" height="4.50" fill="#3a3a3c" rx="0.9"/>
<rect x="855.30" y="810.70" width="62.10" height="2.60" fill="#575757" rx="0.5"/>
<rect x="855.30" y="810.70" width="2.00" height="2.60" fill="#4772b3" rx="0.4"/>
<rect x="858.60" y="811.30" width="7.00" height="1.40" fill="#ffffff" opacity="0.5"/>
<rect x="910.50" y="811.30" width="5.00" height="1.40" fill="#ffffff" opacity="0.42"/>
<circle cx="853.00" cy="812.00" r="1.40" fill="#070707"/><circle cx="853.00" cy="812.00" r="0.95" fill="#e4e4e4"/>
<text transform="translate(855.40,817.85) scale(0.208)" font-size="11" fill="#ffffff" fill-opacity="0.7">ノーマル</text>
<circle cx="853.00" cy="817.00" r="1.35" fill="#070707"/><circle cx="853.00" cy="817.00" r="0.9" fill="#6363c7"/>
<circle cx="919.70" cy="777.00" r="1.40" fill="#070707"/><circle cx="919.70" cy="777.00" r="0.95" fill="#5fc95f"/>
<rect x="852.20" y="882.00" width="68.60" height="74.40" fill="#000" rx="1.5" opacity="0.28"/>
<rect x="853.10" y="882.40" width="66.80" height="72.50" fill="#000" rx="1.0" opacity="0.55"/>
<rect x="853.80" y="883.00" width="65.40" height="71.00" fill="#67677f"/>
<rect x="855.40" y="883.30" width="62.20" height="4.00" fill="#1c1c1c" rx="0.7" stroke="#3a3a3a" stroke-width="0.3"/>
<rect x="855.80" y="884.20" width="2.20" height="2.20" fill="#e8e8e8" rx="1.1" opacity="0.9"/>
<rect x="862.40" y="884.60" width="8.00" height="1.40" fill="#ffffff" opacity="0.7"/>
<rect x="914.00" y="884.30" width="2.20" height="2.00" fill="#777" rx="0.3" opacity="0.8"/>
<rect x="856.40" y="889.25" width="5.00" height="1.50" fill="#ffffff" opacity="0.6"/>
<circle cx="853.80" cy="890.00" r="1.35" fill="#070707"/><circle cx="853.80" cy="890.00" r="0.9" fill="#c7c729"/>
<rect x="855.50" y="906.75" width="62.00" height="4.50" fill="#3a3a3c" rx="0.9"/>
<rect x="856.10" y="907.70" width="60.80" height="2.60" fill="#575757" rx="0.5"/>
<rect x="858.40" y="908.30" width="9.00" height="1.40" fill="#ffffff" opacity="0.5"/>
<rect x="910.00" y="908.30" width="5.00" height="1.40" fill="#ffffff" opacity="0.42"/>
<circle cx="853.80" cy="909.00" r="1.40" fill="#070707"/><circle cx="853.80" cy="909.00" r="0.95" fill="#e4e4e4"/>
<rect x="855.50" y="911.75" width="62.00" height="4.50" fill="#3a3a3c" rx="0.9"/>
<rect x="856.10" y="912.70" width="60.80" height="2.60" fill="#575757" rx="0.5"/>
<rect x="859.40" y="913.30" width="11.00" height="1.40" fill="#ffffff" opacity="0.5"/>
<rect x="911.00" y="913.30" width="4.00" height="1.40" fill="#ffffff" opacity="0.42"/>
<circle cx="853.80" cy="914.00" r="1.40" fill="#070707"/><circle cx="853.80" cy="914.00" r="0.95" fill="#e4e4e4"/>
<rect x="855.50" y="915.75" width="62.00" height="4.50" fill="#3a3a3c" rx="0.9"/>
<rect x="856.10" y="916.70" width="60.80" height="2.60" fill="#575757" rx="0.5"/>
<rect x="858.40" y="917.30" width="5.00" height="1.40" fill="#ffffff" opacity="0.5"/>
<rect x="909.00" y="917.30" width="6.00" height="1.40" fill="#ffffff" opacity="0.42"/>
<circle cx="853.80" cy="918.00" r="1.40" fill="#070707"/><circle cx="853.80" cy="918.00" r="0.95" fill="#e4e4e4"/>
<rect x="855.50" y="920.75" width="62.00" height="4.50" fill="#3a3a3c" rx="0.9"/>
<rect x="856.10" y="921.70" width="60.80" height="2.60" fill="#575757" rx="0.5"/>
<rect x="856.10" y="921.70" width="2.40" height="2.60" fill="#4772b3" rx="0.4"/>
<rect x="858.40" y="922.30" width="11.00" height="1.40" fill="#ffffff" opacity="0.5"/>
<rect x="909.00" y="922.30" width="6.00" height="1.40" fill="#ffffff" opacity="0.42"/>
<circle cx="853.80" cy="923.00" r="1.40" fill="#070707"/><circle cx="853.80" cy="923.00" r="0.95" fill="#e4e4e4"/>
<rect x="855.50" y="925.75" width="62.00" height="4.50" fill="#3a3a3c" rx="0.9"/>
<rect x="856.10" y="926.70" width="60.80" height="2.60" fill="#575757" rx="0.5"/>
<rect x="859.40" y="927.30" width="11.00" height="1.40" fill="#ffffff" opacity="0.5"/>
<rect x="910.00" y="927.30" width="5.00" height="1.40" fill="#ffffff" opacity="0.42"/>
<circle cx="853.80" cy="928.00" r="1.40" fill="#070707"/><circle cx="853.80" cy="928.00" r="0.95" fill="#e4e4e4"/>
<rect x="855.50" y="930.75" width="62.00" height="4.50" fill="#3a3a3c" rx="0.9"/>
<rect x="856.10" y="931.70" width="60.80" height="2.60" fill="#575757" rx="0.5"/>
<rect x="858.40" y="932.30" width="5.00" height="1.40" fill="#ffffff" opacity="0.5"/>
<rect x="910.50" y="932.30" width="4.50" height="1.40" fill="#ffffff" opacity="0.42"/>
<circle cx="853.80" cy="933.00" r="1.40" fill="#070707"/><circle cx="853.80" cy="933.00" r="0.95" fill="#e4e4e4"/>
<rect x="855.50" y="934.75" width="62.00" height="4.50" fill="#3a3a3c" rx="0.9"/>
<rect x="856.10" y="935.70" width="60.80" height="2.60" fill="#575757" rx="0.5"/>
<rect x="858.40" y="936.30" width="5.00" height="1.40" fill="#ffffff" opacity="0.5"/>
<rect x="910.00" y="936.30" width="5.00" height="1.40" fill="#ffffff" opacity="0.42"/>
<circle cx="853.80" cy="937.00" r="1.40" fill="#070707"/><circle cx="853.80" cy="937.00" r="0.95" fill="#e4e4e4"/>
<rect x="855.50" y="939.75" width="62.00" height="4.50" fill="#3a3a3c" rx="0.9"/>
<rect x="856.10" y="940.70" width="60.80" height="2.60" fill="#575757" rx="0.5"/>
<rect x="859.40" y="941.30" width="15.00" height="1.40" fill="#ffffff" opacity="0.5"/>
<rect x="910.00" y="941.30" width="5.00" height="1.40" fill="#ffffff" opacity="0.42"/>
<circle cx="853.80" cy="942.00" r="1.40" fill="#070707"/><circle cx="853.80" cy="942.00" r="0.95" fill="#e4e4e4"/>
<rect x="855.50" y="944.75" width="62.00" height="4.50" fill="#3a3a3c" rx="0.9"/>
<rect x="856.10" y="945.70" width="60.80" height="2.60" fill="#575757" rx="0.5"/>
<rect x="858.40" y="946.30" width="11.00" height="1.40" fill="#ffffff" opacity="0.5"/>
<rect x="910.50" y="946.30" width="4.50" height="1.40" fill="#ffffff" opacity="0.42"/>
<circle cx="853.80" cy="947.00" r="1.40" fill="#070707"/><circle cx="853.80" cy="947.00" r="0.95" fill="#e4e4e4"/>
<rect x="855.50" y="948.75" width="62.00" height="4.50" fill="#3a3a3c" rx="0.9"/>
<rect x="856.10" y="949.70" width="60.80" height="2.60" fill="#575757" rx="0.5"/>
<rect x="858.40" y="950.30" width="13.00" height="1.40" fill="#ffffff" opacity="0.5"/>
<rect x="911.00" y="950.30" width="4.00" height="1.40" fill="#ffffff" opacity="0.42"/>
<circle cx="853.80" cy="951.00" r="1.40" fill="#070707"/><circle cx="853.80" cy="951.00" r="0.95" fill="#e4e4e4"/>
<rect x="855.50" y="892.75" width="62.00" height="4.50" fill="#3a3a3c" rx="0.9"/>
<rect x="856.10" y="893.70" width="60.80" height="2.60" fill="#575757" rx="0.5"/>
<rect x="856.10" y="893.70" width="24.90" height="2.60" fill="#4772b3" rx="0.4"/>
<rect x="858.40" y="894.30" width="4.00" height="1.40" fill="#ffffff" opacity="0.5"/>
<rect x="910.50" y="894.30" width="4.50" height="1.40" fill="#ffffff" opacity="0.42"/>
<circle cx="853.80" cy="895.00" r="1.20" fill="#070707"/><circle cx="853.80" cy="895.00" r="0.75" fill="#a1a1a1"/>
<text transform="translate(856.20,900.85) scale(0.208)" font-size="11" fill="#ffffff" fill-opacity="0.7">ノーマル</text>
<circle cx="853.80" cy="900.00" r="1.35" fill="#070707"/><circle cx="853.80" cy="900.00" r="0.9" fill="#6363c7"/>
<rect x="856.40" y="903.25" width="8.00" height="1.50" fill="#ffffff" opacity="0.7"/>
<rect x="881.60" y="902.40" width="34.60" height="3.80" fill="#a00000" rx="0.4" stroke="#3b3b3f" stroke-width="0.4"/>
<circle cx="853.80" cy="904.00" r="1.35" fill="#070707"/><circle cx="853.80" cy="904.00" r="0.9" fill="#c7c729"/>
<rect x="850.60" y="819.70" width="70.20" height="65.70" fill="#000" rx="1.5" opacity="0.28"/>
<rect x="851.50" y="820.10" width="68.40" height="63.80" fill="#000" rx="1.0" opacity="0.55"/>
<rect x="852.20" y="820.70" width="67.00" height="62.30" fill="#67677f"/>
<rect x="852.20" y="820.70" width="67.00" height="4.10" fill="#364d22"/>
<rect x="853.40" y="822.30" width="0.90" height="0.90" fill="#ffffff" opacity="0.7"/>
<rect x="856.70" y="821.85" width="10.00" height="1.60" fill="#ffffff" opacity="0.75"/>
<rect x="915.60" y="821.30" width="2.60" height="2.90" fill="#ffffff" rx="0.6" opacity="0.85"/>
<rect x="913.80" y="827.25" width="3.20" height="1.50" fill="#ffffff" opacity="0.7"/>
<rect x="853.80" y="832.00" width="63.80" height="4.00" fill="#1c1c1c" rx="0.7" stroke="#3a3a3a" stroke-width="0.3"/>
<rect x="854.20" y="832.90" width="2.20" height="2.20" fill="#e8e8e8" rx="1.1" opacity="0.9"/>
<rect x="860.80" y="833.30" width="8.00" height="1.40" fill="#ffffff" opacity="0.7"/>
<rect x="914.00" y="833.00" width="2.20" height="2.00" fill="#777" rx="0.3" opacity="0.8"/>
<rect x="854.80" y="838.25" width="6.00" height="1.50" fill="#ffffff" opacity="0.6"/>
<circle cx="852.20" cy="839.00" r="1.35" fill="#070707"/><circle cx="852.20" cy="839.00" r="0.9" fill="#c7c729"/>
<rect x="853.90" y="841.75" width="63.60" height="4.50" fill="#3a3a3c" rx="0.9"/>
<rect x="854.50" y="842.70" width="62.40" height="2.60" fill="#575757" rx="0.5"/>
<rect x="854.50" y="842.70" width="2.00" height="2.60" fill="#4772b3" rx="0.4"/>
<rect x="856.80" y="843.30" width="7.00" height="1.40" fill="#ffffff" opacity="0.5"/>
<rect x="910.00" y="843.30" width="5.00" height="1.40" fill="#ffffff" opacity="0.42"/>
<circle cx="852.20" cy="844.00" r="1.40" fill="#070707"/><circle cx="852.20" cy="844.00" r="0.95" fill="#e4e4e4"/>
<rect x="853.90" y="846.75" width="63.60" height="4.50" fill="#3a3a3c" rx="0.9"/>
<rect x="854.50" y="847.70" width="62.40" height="2.60" fill="#575757" rx="0.5"/>
<rect x="854.50" y="847.70" width="2.00" height="2.60" fill="#4772b3" rx="0.4"/>
<rect x="857.80" y="848.30" width="7.00" height="1.40" fill="#ffffff" opacity="0.5"/>
<rect x="911.00" y="848.30" width="4.00" height="1.40" fill="#ffffff" opacity="0.42"/>
<circle cx="852.20" cy="849.00" r="1.40" fill="#070707"/><circle cx="852.20" cy="849.00" r="0.95" fill="#e4e4e4"/>
<rect x="853.90" y="851.25" width="63.60" height="4.50" fill="#3a3a3c" rx="0.9"/>
<rect x="854.50" y="852.20" width="62.40" height="2.60" fill="#575757" rx="0.5"/>
<rect x="854.50" y="852.20" width="42.50" height="2.60" fill="#4772b3" rx="0.4"/>
<rect x="856.80" y="852.80" width="17.00" height="1.40" fill="#ffffff" opacity="0.5"/>
<rect x="910.00" y="852.80" width="5.00" height="1.40" fill="#ffffff" opacity="0.42"/>
<circle cx="852.20" cy="853.50" r="1.40" fill="#070707"/><circle cx="852.20" cy="853.50" r="0.95" fill="#e4e4e4"/>
<rect x="853.90" y="855.75" width="63.60" height="4.50" fill="#3a3a3c" rx="0.9"/>
<rect x="854.50" y="856.70" width="62.40" height="2.60" fill="#575757" rx="0.5"/>
<rect x="856.80" y="857.30" width="15.00" height="1.40" fill="#ffffff" opacity="0.5"/>
<rect x="911.00" y="857.30" width="4.00" height="1.40" fill="#ffffff" opacity="0.42"/>
<circle cx="852.20" cy="858.00" r="1.40" fill="#070707"/><circle cx="852.20" cy="858.00" r="0.95" fill="#e4e4e4"/>
<rect x="853.90" y="860.75" width="63.60" height="4.50" fill="#3a3a3c" rx="0.9"/>
<rect x="854.50" y="861.70" width="62.40" height="2.60" fill="#575757" rx="0.5"/>
<rect x="854.50" y="861.70" width="2.00" height="2.60" fill="#4772b3" rx="0.4"/>
<rect x="857.80" y="862.30" width="15.00" height="1.40" fill="#ffffff" opacity="0.5"/>
<rect x="910.00" y="862.30" width="5.00" height="1.40" fill="#ffffff" opacity="0.42"/>
<circle cx="852.20" cy="863.00" r="1.40" fill="#070707"/><circle cx="852.20" cy="863.00" r="0.95" fill="#e4e4e4"/>
<text transform="translate(854.60,868.85) scale(0.208)" font-size="11" fill="#ffffff" fill-opacity="0.7">ノーマル</text>
<circle cx="852.20" cy="868.00" r="1.35" fill="#070707"/><circle cx="852.20" cy="868.00" r="0.9" fill="#6363c7"/>
<rect x="854.60" y="870.40" width="62.20" height="6.60" fill="#545454" rx="0.6" stroke="#36363a" stroke-width="0.45"/>
<rect x="854.60" y="873.60" width="62.20" height="0.40" fill="#36363a"/>
<rect x="854.60" y="878.00" width="62.20" height="3.90" fill="#545454" rx="0.6" stroke="#36363a" stroke-width="0.45"/>
<rect x="883.50" y="871.30" width="4.00" height="1.40" fill="#ffffff" opacity="0.6"/>
<rect x="883.50" y="874.60" width="4.00" height="1.40" fill="#ffffff" opacity="0.6"/>
<rect x="883.50" y="879.30" width="4.00" height="1.40" fill="#ffffff" opacity="0.6"/>
<circle cx="919.20" cy="828.00" r="1.40" fill="#070707"/><circle cx="919.20" cy="828.00" r="0.95" fill="#5fc95f"/>
<rect x="851.00" y="449.60" width="73.80" height="180.00" fill="#000" rx="1.5" opacity="0.28"/>
<rect x="851.90" y="450.00" width="72.00" height="178.10" fill="#000" rx="1.0" opacity="0.55"/>
<rect x="852.60" y="450.60" width="70.60" height="176.60" fill="#67677f"/>
<rect x="852.60" y="450.60" width="70.60" height="3.90" fill="#364d22"/>
<rect x="853.80" y="452.10" width="0.90" height="0.90" fill="#ffffff" opacity="0.7"/>
<rect x="857.10" y="451.65" width="10.00" height="1.60" fill="#ffffff" opacity="0.75"/>
<rect x="919.60" y="451.20" width="2.60" height="2.70" fill="#ffffff" rx="0.6" opacity="0.85"/>
<rect x="917.80" y="456.25" width="3.20" height="1.50" fill="#ffffff" opacity="0.7"/>
<rect x="854.20" y="462.00" width="67.40" height="4.00" fill="#1c1c1c" rx="0.7" stroke="#3a3a3a" stroke-width="0.3"/>
<rect x="854.60" y="462.90" width="2.20" height="2.20" fill="#e8e8e8" rx="1.1" opacity="0.9"/>
<rect x="861.20" y="463.30" width="8.00" height="1.40" fill="#ffffff" opacity="0.7"/>
<rect x="918.00" y="463.00" width="2.20" height="2.00" fill="#777" rx="0.3" opacity="0.8"/>
<rect x="855.20" y="468.35" width="6.00" height="1.50" fill="#ffffff" opacity="0.6"/>
<circle cx="852.60" cy="469.10" r="1.35" fill="#070707"/><circle cx="852.60" cy="469.10" r="0.9" fill="#c7c729"/>
<rect x="855.20" y="473.45" width="6.00" height="1.50" fill="#ffffff" opacity="0.6"/>
<circle cx="852.60" cy="474.20" r="1.35" fill="#070707"/><circle cx="852.60" cy="474.20" r="0.9" fill="#c7c729"/>
<rect x="855.20" y="477.45" width="6.00" height="1.50" fill="#ffffff" opacity="0.6"/>
<circle cx="852.60" cy="478.20" r="1.35" fill="#070707"/><circle cx="852.60" cy="478.20" r="0.9" fill="#c7c729"/>
<text transform="translate(855.00,483.85) scale(0.208)" font-size="11" fill="#ffffff" fill-opacity="0.7">ノーマル</text>
<circle cx="852.60" cy="483.00" r="1.35" fill="#070707"/><circle cx="852.60" cy="483.00" r="0.9" fill="#6363c7"/>
<rect x="854.30" y="485.75" width="67.20" height="4.50" fill="#3a3a3c" rx="0.9"/>
<rect x="854.90" y="486.70" width="66.00" height="2.60" fill="#575757" rx="0.5"/>
<rect x="854.90" y="486.70" width="28.10" height="2.60" fill="#4772b3" rx="0.4"/>
<rect x="857.20" y="487.30" width="13.00" height="1.40" fill="#ffffff" opacity="0.5"/>
<rect x="914.00" y="487.30" width="5.00" height="1.40" fill="#ffffff" opacity="0.42"/>
<circle cx="852.60" cy="488.00" r="1.40" fill="#070707"/><circle cx="852.60" cy="488.00" r="0.95" fill="#e4e4e4"/>
<rect x="854.30" y="489.95" width="67.20" height="4.50" fill="#3a3a3c" rx="0.9"/>
<rect x="854.90" y="490.90" width="66.00" height="2.60" fill="#575757" rx="0.5"/>
<rect x="858.20" y="491.50" width="7.00" height="1.40" fill="#ffffff" opacity="0.5"/>
<rect x="914.00" y="491.50" width="5.00" height="1.40" fill="#ffffff" opacity="0.42"/>
<circle cx="852.60" cy="492.20" r="1.40" fill="#070707"/><circle cx="852.60" cy="492.20" r="0.95" fill="#e4e4e4"/>
<rect x="854.30" y="494.75" width="67.20" height="4.50" fill="#3a3a3c" rx="0.9"/>
<rect x="854.90" y="495.70" width="66.00" height="2.60" fill="#575757" rx="0.5"/>
<rect x="857.20" y="496.30" width="17.00" height="1.40" fill="#ffffff" opacity="0.5"/>
<rect x="914.50" y="496.30" width="4.50" height="1.40" fill="#ffffff" opacity="0.42"/>
<circle cx="852.60" cy="497.00" r="1.40" fill="#070707"/><circle cx="852.60" cy="497.00" r="0.95" fill="#e4e4e4"/>
<rect x="854.30" y="499.75" width="67.20" height="4.50" fill="#3a3a3c" rx="0.9"/>
<rect x="854.90" y="500.70" width="66.00" height="2.60" fill="#575757" rx="0.5"/>
<rect x="857.20" y="501.30" width="13.00" height="1.40" fill="#ffffff" opacity="0.5"/>
<rect x="914.00" y="501.30" width="5.00" height="1.40" fill="#ffffff" opacity="0.42"/>
<circle cx="852.60" cy="502.00" r="1.40" fill="#070707"/><circle cx="852.60" cy="502.00" r="0.95" fill="#e4e4e4"/>
<rect x="854.30" y="503.95" width="67.20" height="4.50" fill="#3a3a3c" rx="0.9"/>
<rect x="854.90" y="504.90" width="66.00" height="2.60" fill="#575757" rx="0.5"/>
<rect x="858.20" y="505.50" width="15.00" height="1.40" fill="#ffffff" opacity="0.5"/>
<rect x="914.50" y="505.50" width="4.50" height="1.40" fill="#ffffff" opacity="0.42"/>
<circle cx="852.60" cy="506.20" r="1.40" fill="#070707"/><circle cx="852.60" cy="506.20" r="0.95" fill="#e4e4e4"/>
<rect x="854.30" y="508.75" width="67.20" height="4.50" fill="#3a3a3c" rx="0.9"/>
<rect x="854.90" y="509.70" width="66.00" height="2.60" fill="#575757" rx="0.5"/>
<rect x="857.20" y="510.30" width="13.00" height="1.40" fill="#ffffff" opacity="0.5"/>
<rect x="914.50" y="510.30" width="4.50" height="1.40" fill="#ffffff" opacity="0.42"/>
<circle cx="852.60" cy="511.00" r="1.40" fill="#070707"/><circle cx="852.60" cy="511.00" r="0.95" fill="#e4e4e4"/>
<rect x="854.30" y="513.75" width="67.20" height="4.50" fill="#3a3a3c" rx="0.9"/>
<rect x="854.90" y="514.70" width="66.00" height="2.60" fill="#575757" rx="0.5"/>
<rect x="857.20" y="515.30" width="17.00" height="1.40" fill="#ffffff" opacity="0.5"/>
<rect x="914.50" y="515.30" width="4.50" height="1.40" fill="#ffffff" opacity="0.42"/>
<circle cx="852.60" cy="516.00" r="1.40" fill="#070707"/><circle cx="852.60" cy="516.00" r="0.95" fill="#e4e4e4"/>
<rect x="854.30" y="518.75" width="67.20" height="4.50" fill="#3a3a3c" rx="0.9"/>
<rect x="854.90" y="519.70" width="66.00" height="2.60" fill="#575757" rx="0.5"/>
<rect x="854.90" y="519.70" width="38.10" height="2.60" fill="#4772b3" rx="0.4"/>
<rect x="858.20" y="520.30" width="17.00" height="1.40" fill="#ffffff" opacity="0.5"/>
<rect x="913.00" y="520.30" width="6.00" height="1.40" fill="#ffffff" opacity="0.42"/>
<circle cx="852.60" cy="521.00" r="1.40" fill="#070707"/><circle cx="852.60" cy="521.00" r="0.95" fill="#e4e4e4"/>
<rect x="854.30" y="522.95" width="67.20" height="4.50" fill="#3a3a3c" rx="0.9"/>
<rect x="854.90" y="523.90" width="66.00" height="2.60" fill="#575757" rx="0.5"/>
<rect x="857.20" y="524.50" width="15.00" height="1.40" fill="#ffffff" opacity="0.5"/>
<rect x="914.50" y="524.50" width="4.50" height="1.40" fill="#ffffff" opacity="0.42"/>
<circle cx="852.60" cy="525.20" r="1.40" fill="#070707"/><circle cx="852.60" cy="525.20" r="0.95" fill="#e4e4e4"/>
<rect x="854.30" y="527.75" width="67.20" height="4.50" fill="#3a3a3c" rx="0.9"/>
<rect x="854.90" y="528.70" width="66.00" height="2.60" fill="#575757" rx="0.5"/>
<rect x="857.20" y="529.30" width="7.00" height="1.40" fill="#ffffff" opacity="0.5"/>
<rect x="913.00" y="529.30" width="6.00" height="1.40" fill="#ffffff" opacity="0.42"/>
<circle cx="852.60" cy="530.00" r="1.40" fill="#070707"/><circle cx="852.60" cy="530.00" r="0.95" fill="#e4e4e4"/>
<rect x="854.30" y="532.75" width="67.20" height="4.50" fill="#3a3a3c" rx="0.9"/>
<rect x="854.90" y="533.70" width="66.00" height="2.60" fill="#575757" rx="0.5"/>
<rect x="858.20" y="534.30" width="9.00" height="1.40" fill="#ffffff" opacity="0.5"/>
<rect x="915.00" y="534.30" width="4.00" height="1.40" fill="#ffffff" opacity="0.42"/>
<circle cx="852.60" cy="535.00" r="1.40" fill="#070707"/><circle cx="852.60" cy="535.00" r="0.95" fill="#e4e4e4"/>
<rect x="854.30" y="536.75" width="67.20" height="4.50" fill="#3a3a3c" rx="0.9"/>
<rect x="854.90" y="537.70" width="66.00" height="2.60" fill="#575757" rx="0.5"/>
<rect x="857.20" y="538.30" width="5.00" height="1.40" fill="#ffffff" opacity="0.5"/>
<rect x="914.00" y="538.30" width="5.00" height="1.40" fill="#ffffff" opacity="0.42"/>
<circle cx="852.60" cy="539.00" r="1.40" fill="#070707"/><circle cx="852.60" cy="539.00" r="0.95" fill="#e4e4e4"/>
<rect x="854.30" y="541.75" width="67.20" height="4.50" fill="#3a3a3c" rx="0.9"/>
<rect x="854.90" y="542.70" width="66.00" height="2.60" fill="#575757" rx="0.5"/>
<rect x="857.20" y="543.30" width="11.00" height="1.40" fill="#ffffff" opacity="0.5"/>
<rect x="914.00" y="543.30" width="5.00" height="1.40" fill="#ffffff" opacity="0.42"/>
<circle cx="852.60" cy="544.00" r="1.40" fill="#070707"/><circle cx="852.60" cy="544.00" r="0.95" fill="#e4e4e4"/>
<rect x="854.30" y="546.75" width="67.20" height="4.50" fill="#3a3a3c" rx="0.9"/>
<rect x="854.90" y="547.70" width="66.00" height="2.60" fill="#575757" rx="0.5"/>
<rect x="858.20" y="548.30" width="7.00" height="1.40" fill="#ffffff" opacity="0.5"/>
<rect x="914.00" y="548.30" width="5.00" height="1.40" fill="#ffffff" opacity="0.42"/>
<circle cx="852.60" cy="549.00" r="1.40" fill="#070707"/><circle cx="852.60" cy="549.00" r="0.95" fill="#e4e4e4"/>
<rect x="854.30" y="551.05" width="67.20" height="4.50" fill="#3a3a3c" rx="0.9"/>
<rect x="854.90" y="552.00" width="66.00" height="2.60" fill="#575757" rx="0.5"/>
<rect x="857.20" y="552.60" width="11.00" height="1.40" fill="#ffffff" opacity="0.5"/>
<rect x="914.00" y="552.60" width="5.00" height="1.40" fill="#ffffff" opacity="0.42"/>
<circle cx="852.60" cy="553.30" r="1.40" fill="#070707"/><circle cx="852.60" cy="553.30" r="0.95" fill="#e4e4e4"/>
<rect x="854.30" y="555.75" width="67.20" height="4.50" fill="#3a3a3c" rx="0.9"/>
<rect x="854.90" y="556.70" width="66.00" height="2.60" fill="#575757" rx="0.5"/>
<rect x="854.90" y="556.70" width="2.60" height="2.60" fill="#4772b3" rx="0.4"/>
<rect x="857.20" y="557.30" width="9.00" height="1.40" fill="#ffffff" opacity="0.5"/>
<rect x="915.00" y="557.30" width="4.00" height="1.40" fill="#ffffff" opacity="0.42"/>
<circle cx="852.60" cy="558.00" r="1.40" fill="#070707"/><circle cx="852.60" cy="558.00" r="0.95" fill="#e4e4e4"/>
<rect x="854.30" y="560.75" width="67.20" height="4.50" fill="#3a3a3c" rx="0.9"/>
<rect x="854.90" y="561.70" width="66.00" height="2.60" fill="#575757" rx="0.5"/>
<rect x="858.20" y="562.30" width="7.00" height="1.40" fill="#ffffff" opacity="0.5"/>
<rect x="915.00" y="562.30" width="4.00" height="1.40" fill="#ffffff" opacity="0.42"/>
<circle cx="852.60" cy="563.00" r="1.40" fill="#070707"/><circle cx="852.60" cy="563.00" r="0.95" fill="#e4e4e4"/>
<rect x="854.30" y="565.75" width="67.20" height="4.50" fill="#3a3a3c" rx="0.9"/>
<rect x="854.90" y="566.70" width="66.00" height="2.60" fill="#575757" rx="0.5"/>
<rect x="857.20" y="567.30" width="7.00" height="1.40" fill="#ffffff" opacity="0.5"/>
<rect x="913.00" y="567.30" width="6.00" height="1.40" fill="#ffffff" opacity="0.42"/>
<circle cx="852.60" cy="568.00" r="1.40" fill="#070707"/><circle cx="852.60" cy="568.00" r="0.95" fill="#e4e4e4"/>
<rect x="854.30" y="569.95" width="67.20" height="4.50" fill="#3a3a3c" rx="0.9"/>
<rect x="854.90" y="570.90" width="66.00" height="2.60" fill="#575757" rx="0.5"/>
<rect x="857.20" y="571.50" width="7.00" height="1.40" fill="#ffffff" opacity="0.5"/>
<rect x="914.00" y="571.50" width="5.00" height="1.40" fill="#ffffff" opacity="0.42"/>
<circle cx="852.60" cy="572.20" r="1.40" fill="#070707"/><circle cx="852.60" cy="572.20" r="0.95" fill="#e4e4e4"/>
<rect x="854.30" y="574.75" width="67.20" height="4.50" fill="#3a3a3c" rx="0.9"/>
<rect x="854.90" y="575.70" width="66.00" height="2.60" fill="#575757" rx="0.5"/>
<rect x="858.20" y="576.30" width="7.00" height="1.40" fill="#ffffff" opacity="0.5"/>
<rect x="913.00" y="576.30" width="6.00" height="1.40" fill="#ffffff" opacity="0.42"/>
<circle cx="852.60" cy="577.00" r="1.40" fill="#070707"/><circle cx="852.60" cy="577.00" r="0.95" fill="#e4e4e4"/>
<rect x="854.30" y="579.75" width="67.20" height="4.50" fill="#3a3a3c" rx="0.9"/>
<rect x="854.90" y="580.70" width="66.00" height="2.60" fill="#575757" rx="0.5"/>
<rect x="854.90" y="580.70" width="2.60" height="2.60" fill="#4772b3" rx="0.4"/>
<rect x="857.20" y="581.30" width="13.00" height="1.40" fill="#ffffff" opacity="0.5"/>
<rect x="915.00" y="581.30" width="4.00" height="1.40" fill="#ffffff" opacity="0.42"/>
<circle cx="852.60" cy="582.00" r="1.40" fill="#070707"/><circle cx="852.60" cy="582.00" r="0.95" fill="#e4e4e4"/>
<rect x="854.30" y="583.95" width="67.20" height="4.50" fill="#3a3a3c" rx="0.9"/>
<rect x="854.90" y="584.90" width="66.00" height="2.60" fill="#575757" rx="0.5"/>
<rect x="857.20" y="585.50" width="11.00" height="1.40" fill="#ffffff" opacity="0.5"/>
<rect x="914.00" y="585.50" width="5.00" height="1.40" fill="#ffffff" opacity="0.42"/>
<circle cx="852.60" cy="586.20" r="1.40" fill="#070707"/><circle cx="852.60" cy="586.20" r="0.95" fill="#e4e4e4"/>
<rect x="854.30" y="588.75" width="67.20" height="4.50" fill="#3a3a3c" rx="0.9"/>
<rect x="854.90" y="589.70" width="66.00" height="2.60" fill="#575757" rx="0.5"/>
<rect x="858.20" y="590.30" width="17.00" height="1.40" fill="#ffffff" opacity="0.5"/>
<rect x="915.00" y="590.30" width="4.00" height="1.40" fill="#ffffff" opacity="0.42"/>
<circle cx="852.60" cy="591.00" r="1.40" fill="#070707"/><circle cx="852.60" cy="591.00" r="0.95" fill="#e4e4e4"/>
<rect x="854.30" y="593.75" width="67.20" height="4.50" fill="#3a3a3c" rx="0.9"/>
<rect x="854.90" y="594.70" width="66.00" height="2.60" fill="#575757" rx="0.5"/>
<rect x="857.20" y="595.30" width="17.00" height="1.40" fill="#ffffff" opacity="0.5"/>
<rect x="915.00" y="595.30" width="4.00" height="1.40" fill="#ffffff" opacity="0.42"/>
<circle cx="852.60" cy="596.00" r="1.40" fill="#070707"/><circle cx="852.60" cy="596.00" r="0.95" fill="#e4e4e4"/>
<rect x="854.30" y="598.05" width="67.20" height="4.50" fill="#3a3a3c" rx="0.9"/>
<rect x="854.90" y="599.00" width="66.00" height="2.60" fill="#575757" rx="0.5"/>
<rect x="854.90" y="599.00" width="7.10" height="2.60" fill="#4772b3" rx="0.4"/>
<rect x="857.20" y="599.60" width="11.00" height="1.40" fill="#ffffff" opacity="0.5"/>
<rect x="914.50" y="599.60" width="4.50" height="1.40" fill="#ffffff" opacity="0.42"/>
<circle cx="852.60" cy="600.30" r="1.40" fill="#070707"/><circle cx="852.60" cy="600.30" r="0.95" fill="#e4e4e4"/>
<rect x="854.30" y="602.85" width="67.20" height="4.50" fill="#3a3a3c" rx="0.9"/>
<rect x="854.90" y="603.80" width="66.00" height="2.60" fill="#575757" rx="0.5"/>
<rect x="858.20" y="604.40" width="11.00" height="1.40" fill="#ffffff" opacity="0.5"/>
<rect x="914.50" y="604.40" width="4.50" height="1.40" fill="#ffffff" opacity="0.42"/>
<circle cx="852.60" cy="605.10" r="1.40" fill="#070707"/><circle cx="852.60" cy="605.10" r="0.95" fill="#e4e4e4"/>
<rect x="854.30" y="607.75" width="67.20" height="4.50" fill="#3a3a3c" rx="0.9"/>
<rect x="854.90" y="608.70" width="66.00" height="2.60" fill="#575757" rx="0.5"/>
<rect x="857.20" y="609.30" width="11.00" height="1.40" fill="#ffffff" opacity="0.5"/>
<rect x="914.00" y="609.30" width="5.00" height="1.40" fill="#ffffff" opacity="0.42"/>
<circle cx="852.60" cy="610.00" r="1.40" fill="#070707"/><circle cx="852.60" cy="610.00" r="0.95" fill="#e4e4e4"/>
<rect x="854.30" y="612.35" width="67.20" height="4.50" fill="#3a3a3c" rx="0.9"/>
<rect x="854.90" y="613.30" width="66.00" height="2.60" fill="#575757" rx="0.5"/>
<rect x="857.20" y="613.90" width="5.00" height="1.40" fill="#ffffff" opacity="0.5"/>
<rect x="913.00" y="613.90" width="6.00" height="1.40" fill="#ffffff" opacity="0.42"/>
<circle cx="852.60" cy="614.60" r="1.40" fill="#070707"/><circle cx="852.60" cy="614.60" r="0.95" fill="#e4e4e4"/>
<rect x="854.30" y="617.15" width="67.20" height="4.50" fill="#3a3a3c" rx="0.9"/>
<rect x="854.90" y="618.10" width="66.00" height="2.60" fill="#575757" rx="0.5"/>
<rect x="858.20" y="618.70" width="11.00" height="1.40" fill="#ffffff" opacity="0.5"/>
<rect x="913.00" y="618.70" width="6.00" height="1.40" fill="#ffffff" opacity="0.42"/>
<circle cx="852.60" cy="619.40" r="1.40" fill="#070707"/><circle cx="852.60" cy="619.40" r="0.95" fill="#e4e4e4"/>
<rect x="854.30" y="621.75" width="67.20" height="4.50" fill="#3a3a3c" rx="0.9"/>
<rect x="854.90" y="622.70" width="66.00" height="2.60" fill="#575757" rx="0.5"/>
<rect x="857.20" y="623.30" width="15.00" height="1.40" fill="#ffffff" opacity="0.5"/>
<rect x="915.00" y="623.30" width="4.00" height="1.40" fill="#ffffff" opacity="0.42"/>
<circle cx="852.60" cy="624.00" r="1.40" fill="#070707"/><circle cx="852.60" cy="624.00" r="0.95" fill="#e4e4e4"/>
<circle cx="923.20" cy="457.00" r="1.40" fill="#070707"/><circle cx="923.20" cy="457.00" r="0.95" fill="#5fc95f"/>
<rect x="852.10" y="450.10" width="71.60" height="177.60" fill="none" stroke="#f2f2f2" stroke-width="1.1" rx="1"/>
<rect x="994.40" y="373.00" width="62.20" height="57.40" fill="#000" rx="1.5" opacity="0.28"/>
<rect x="995.30" y="373.40" width="60.40" height="55.50" fill="#000" rx="1.0" opacity="0.55"/>
<rect x="996.00" y="374.00" width="59.00" height="54.00" fill="#67677f"/>
<rect x="996.00" y="374.00" width="59.00" height="3.80" fill="#364d22"/>
<rect x="997.20" y="375.45" width="0.90" height="0.90" fill="#ffffff" opacity="0.7"/>
<rect x="1000.50" y="375.00" width="9.00" height="1.60" fill="#ffffff" opacity="0.75"/>
<rect x="1051.40" y="374.60" width="2.60" height="2.60" fill="#ffffff" rx="0.6" opacity="0.85"/>
<rect x="1042.40" y="380.25" width="10.00" height="1.50" fill="#ffffff" opacity="0.55"/>
<circle cx="1055.00" cy="381.00" r="1.40" fill="#070707"/><circle cx="1055.00" cy="381.00" r="0.95" fill="#5fc95f"/>
<rect x="997.60" y="385.90" width="55.20" height="3.40" fill="#1c1c1c" rx="0.7" stroke="#3a3a3a" stroke-width="0.3"/>
<rect x="998.00" y="386.50" width="2.20" height="2.20" fill="#e8e8e8" rx="1.1" opacity="0.9"/>
<rect x="1004.60" y="386.90" width="19.00" height="1.40" fill="#ffffff" opacity="0.7"/>
<rect x="1049.20" y="386.60" width="2.20" height="2.00" fill="#777" rx="0.3" opacity="0.8"/>
<rect x="998.40" y="391.75" width="13.50" height="1.50" fill="#ffffff" opacity="0.62"/>
<circle cx="996.00" cy="392.50" r="1.35" fill="#070707"/><circle cx="996.00" cy="392.50" r="0.9" fill="#5fc95f"/>
<rect x="998.40" y="396.45" width="12.00" height="1.50" fill="#ffffff" opacity="0.62"/>
<circle cx="996.00" cy="397.20" r="1.35" fill="#070707"/><circle cx="996.00" cy="397.20" r="0.9" fill="#5fc95f"/>
<rect x="998.40" y="401.25" width="10.00" height="1.50" fill="#ffffff" opacity="0.62"/>
<circle cx="996.00" cy="402.00" r="1.35" fill="#070707"/><circle cx="996.00" cy="402.00" r="0.9" fill="#5fc95f"/>
<rect x="998.40" y="406.25" width="9.00" height="1.50" fill="#ffffff" opacity="0.62"/>
<circle cx="996.00" cy="407.00" r="1.35" fill="#070707"/><circle cx="996.00" cy="407.00" r="0.9" fill="#5fc95f"/>
<rect x="998.40" y="410.65" width="9.00" height="1.50" fill="#ffffff" opacity="0.62"/>
<circle cx="996.00" cy="411.40" r="1.35" fill="#070707"/><circle cx="996.00" cy="411.40" r="0.9" fill="#5fc95f"/>
<rect x="998.40" y="415.65" width="13.00" height="1.50" fill="#ffffff" opacity="0.62"/>
<circle cx="996.00" cy="416.40" r="1.35" fill="#070707"/><circle cx="996.00" cy="416.40" r="0.9" fill="#5fc95f"/>
<rect x="998.40" y="420.25" width="12.00" height="1.50" fill="#ffffff" opacity="0.62"/>
<circle cx="996.00" cy="421.00" r="1.35" fill="#070707"/><circle cx="996.00" cy="421.00" r="0.9" fill="#5fc95f"/>
<rect x="998.40" y="424.45" width="11.00" height="1.50" fill="#ffffff" opacity="0.62"/>
<circle cx="996.00" cy="425.20" r="1.35" fill="#070707"/><circle cx="996.00" cy="425.20" r="0.9" fill="#5fc95f"/>
<rect x="1076.40" y="367.50" width="31.40" height="27.90" fill="#000" rx="1.5" opacity="0.28"/>
<rect x="1077.30" y="367.90" width="29.60" height="26.00" fill="#000" rx="1.0" opacity="0.55"/>
<rect x="1078.00" y="368.50" width="28.20" height="24.50" fill="#303030"/>
<rect x="1078.00" y="368.50" width="28.20" height="4.20" fill="#531c2c"/>
<rect x="1079.60" y="370.15" width="0.90" height="0.90" fill="#ffffff" opacity="0.7"/>
<text transform="translate(1082.60,371.25) scale(0.208)" font-size="11" fill="#ffffff" fill-opacity="0.95">マテリアル出力</text>
<rect x="1080.20" y="374.60" width="23.80" height="3.00" fill="#282828" rx="0.6" stroke="#505050" stroke-width="0.35"/>
<text transform="translate(1081.30,376.95) scale(0.208)" font-size="11" fill="#ffffff" fill-opacity="0.85">全て</text>
<rect x="1101.80" y="375.85" width="1.20" height="0.90" fill="#ffffff" opacity="0.6"/>
<text transform="translate(1080.60,381.85) scale(0.208)" font-size="11" fill="#ffffff" fill-opacity="0.8">サーフェス</text>
<circle cx="1078.00" cy="381.00" r="1.25" fill="#070707"/><circle cx="1078.00" cy="381.00" r="0.8" fill="#5fc95f"/>
<text transform="translate(1080.60,386.85) scale(0.208)" font-size="11" fill="#ffffff" fill-opacity="0.8">ボリューム</text>
<circle cx="1078.00" cy="386.00" r="1.25" fill="#070707"/><circle cx="1078.00" cy="386.00" r="0.8" fill="#3c7a3c"/>
<text transform="translate(1080.60,391.05) scale(0.208)" font-size="11" fill="#ffffff" fill-opacity="0.8">ディスプレイスメント</text>
<circle cx="1078.00" cy="390.20" r="1.25" fill="#070707"/><circle cx="1078.00" cy="390.20" r="0.8" fill="#6363c7"/>
</svg></div>
<div id="chrome">
<div id="topbar"></div>
<svg class="ic" style="left:9px;top:5px" width="17" height="16" viewBox="0 0 17 16"><g fill="none" stroke="#e6e6e6" stroke-linecap="round"><circle cx="10.2" cy="9.3" r="4.6" stroke-width="2"/><path d="M1.3,11.0 L8.2,5.3" stroke-width="1.8"/><path d="M2.2,5.1 L8.3,5.1" stroke-width="1.6"/><path d="M6.6,1.6 L11.4,5.3" stroke-width="1.7"/></g><circle cx="10.2" cy="9.3" r="1.35" fill="#e6e6e6"/></svg>
<span class="t " style="left:35px;top:6px;">ファイル</span>
<span class="t " style="left:93px;top:6px;">編集</span>
<span class="t " style="left:130.5px;top:6px;">レンダー</span>
<span class="t " style="left:189.5px;top:6px;">ウィンドウ</span>
<span class="t " style="left:259px;top:6px;">ヘルプ</span>
<div class="b " style="left:317px;top:3px;width:57px;height:20px;background:#545454;border-radius:4px"></div>
<svg class="ic" style="left:321px;top:5px" width="16" height="16" viewBox="0 0 16 16"><g fill="none" stroke="#e6e6e6" stroke-width="1.05" stroke-linecap="round" stroke-linejoin="round"><path d="M1.2,1.6 H14.6 V11.2 H1.2 Z"/><path d="M8,11.4 V14.2 M4.6,14.4 H11.4"/><path d="M4,6.4 H12 M7,3.4 L4,6.4 L7,9.4"/></g></svg>
<span class="t " style="left:343px;top:6px;">戻る</span>
<div class="b btn" style="left:1284px;top:3px;width:191px;height:20px;background:#282828"></div>
<div class="b " style="left:1314px;top:4px;width:121px;height:18px;background:#1d1d1d;border-left:1px solid #3d3d3d"></div>
<div class="b " style="left:1435px;top:4px;width:20px;height:18px;background:#4b4b4b;border-left:1px solid #333"></div>
<div class="b " style="left:1455px;top:4px;width:19px;height:18px;background:#303030;border-left:1px solid #3d3d3d;border-radius:0 3px 3px 0"></div>
<svg class="ic" style="left:1287px;top:5px" width="16" height="16" viewBox="0 0 16 16"><path d="M4.2,1.2 C3.2,4.2 1.2,7.5 1.2,9.6 C1.2,11.4 2.6,12.4 4.2,12.4 C5.0,12.4 5.8,12.1 6.3,11.6 C5.9,10.2 6.5,8.6 7.4,7.8 C6.5,5.8 5.2,3.6 4.2,1.2 Z" fill="#e6e6e6"/><circle cx="11.2" cy="3.6" r="2" fill="#e6e6e6"/><circle cx="10.3" cy="11" r="3.4" fill="none" stroke="#e6e6e6" stroke-width="1.05"/><path d="M8.6,10.2 A2 2 0 0 1 10.4 8.8" fill="none" stroke="#e6e6e6" stroke-width="0.9"/></svg>
<svg class="ic" style="left:1304px;top:11px" width="7" height="4" viewBox="0 0 7 4"><path d="M0.4,0.4 L3.5,3.5 L6.6,0.4" fill="none" stroke="#e6e6e6" stroke-width="1.3" stroke-linecap="round" stroke-linejoin="round"/></svg>
<span class="t " style="left:1322px;top:6px;">Scene</span>
<svg class="ic" style="left:1415px;top:5px" width="16" height="16" viewBox="0 0 16 16"><g fill="none" stroke="#8c8c8c" stroke-width="1.05" stroke-linecap="round" stroke-linejoin="round"><path d="M9.2,1.4 L14.4,6.6 L12.6,7.2 L10.0,9.8 L10.2,12.6 L3.2,5.6 L6.0,5.8 L8.6,3.2 Z"/><path d="M6.6,9.2 L1.6,14.2"/></g></svg>
<svg class="ic" style="left:1437px;top:5px" width="16" height="16" viewBox="0 0 16 16"><g fill="none" stroke="#e6e6e6" stroke-width="1.05" stroke-linejoin="round"><path d="M5.2,1.2 H11.4 L14.4,4.2 V11.2 H5.2 Z"/><path d="M11.2,1.4 V4.4 H14.2"/><path d="M5,4.6 H1.8 V14.6 H10.6 V11.4"/></g></svg>
<svg class="ic" style="left:1459px;top:7px" width="12" height="12" viewBox="0 0 12 12"><path d="M2.4,2.4 L9.6,9.6 M9.6,2.4 L2.4,9.6" fill="none" stroke="#5e5e5e" stroke-width="1.3" stroke-linecap="round"/></svg>
<div class="b btn" style="left:1481px;top:3px;width:190px;height:20px;background:#282828"></div>
<div class="b " style="left:1511px;top:4px;width:121px;height:18px;background:#1d1d1d;border-left:1px solid #3d3d3d"></div>
<div class="b " style="left:1632px;top:4px;width:20px;height:18px;background:#4b4b4b;border-left:1px solid #333"></div>
<div class="b " style="left:1652px;top:4px;width:18px;height:18px;background:#303030;border-left:1px solid #3d3d3d;border-radius:0 3px 3px 0"></div>
<svg class="ic" style="left:1484px;top:5px" width="16" height="16" viewBox="0 0 16 16"><g fill="none" stroke="#e6e6e6" stroke-width="1.05" stroke-linejoin="round"><path d="M4.4,1.6 H14.4 V11 H4.4 Z"/><path d="M2.8,4 V12.8 H12.2"/><path d="M1.2,6.2 V14.6 H10"/></g><path d="M5.2,10.4 L8.4,5.6 L10.2,8.2 L11.4,7 L13.6,10.4 Z" fill="#e6e6e6"/><circle cx="11.8" cy="4.2" r="1" fill="#e6e6e6"/></svg>
<svg class="ic" style="left:1501px;top:11px" width="7" height="4" viewBox="0 0 7 4"><path d="M0.4,0.4 L3.5,3.5 L6.6,0.4" fill="none" stroke="#e6e6e6" stroke-width="1.3" stroke-linecap="round" stroke-linejoin="round"/></svg>
<span class="t " style="left:1519px;top:6px;">ViewLayer</span>
<svg class="ic" style="left:1634px;top:5px" width="16" height="16" viewBox="0 0 16 16"><g fill="none" stroke="#e6e6e6" stroke-width="1.05" stroke-linejoin="round"><path d="M5.2,1.2 H11.4 L14.4,4.2 V11.2 H5.2 Z"/><path d="M11.2,1.4 V4.4 H14.2"/><path d="M5,4.6 H1.8 V14.6 H10.6 V11.4"/></g></svg>
<svg class="ic" style="left:1656px;top:7px" width="12" height="12" viewBox="0 0 12 12"><path d="M2.4,2.4 L9.6,9.6 M9.6,2.4 L2.4,9.6" fill="none" stroke="#5e5e5e" stroke-width="1.3" stroke-linecap="round"/></svg>
<div class="b btn" style="left:8px;top:30px;width:32px;height:20px;"></div>
<svg class="ic" style="left:12px;top:32px" width="16" height="16" viewBox="0 0 16 16"><circle cx="8" cy="8" r="6.6" fill="none" stroke="#e6e6e6" stroke-width="1.3"/><path d="M3.6,8.4 A4.6 4.6 0 0 1 6.2 4.2" fill="none" stroke="#e6e6e6" stroke-width="1.3" stroke-linecap="round"/><rect x="7.3" y="3.2" width="1.8" height="1.8" fill="#e6e6e6"/></svg>
<svg class="ic" style="left:30px;top:39px" width="7" height="4" viewBox="0 0 7 4"><path d="M0.4,0.4 L3.5,3.5 L6.6,0.4" fill="none" stroke="#e6e6e6" stroke-width="1.3" stroke-linecap="round" stroke-linejoin="round"/></svg>
<div class="b btn" style="left:45px;top:30px;width:117px;height:20px;"></div>
<svg class="ic" style="left:50px;top:33px" width="14" height="14" viewBox="0 0 14 14"><g fill="none" stroke="#e6e6e6" stroke-width="1.05"><path d="M0.6,4 V0.6 H4 M10,0.6 H13.4 V4 M13.4,10 V13.4 H10 M4,13.4 H0.6 V10"/></g><rect x="3" y="3" width="8" height="8" fill="#e6e6e6"/></svg>
<span class="t " style="left:71px;top:33px;">オブジェクト</span>
<svg class="ic" style="left:151.5px;top:39px" width="7" height="4" viewBox="0 0 7 4"><path d="M0.4,0.4 L3.5,3.5 L6.6,0.4" fill="none" stroke="#e6e6e6" stroke-width="1.3" stroke-linecap="round" stroke-linejoin="round"/></svg>
<span class="t " style="left:174px;top:33px;">ビュー</span>
<span class="t " style="left:221.5px;top:33px;">選択</span>
<span class="t " style="left:258.5px;top:33px;">追加</span>
<span class="t " style="left:296px;top:33px;">ノード</span>
<div class="b " style="left:343px;top:34px;width:12px;height:12px;background:#4772b3;border-radius:2.5px;border:1px solid #3d63a0"></div>
<svg class="ic" style="left:344px;top:35px" width="10" height="10" viewBox="0 0 10 10"><path d="M2,5.2 L4.2,7.6 L8.2,2.6" fill="none" stroke="#fff" stroke-width="1.5" stroke-linecap="round" stroke-linejoin="round"/></svg>
<span class="t " style="left:359px;top:33px;">ノードを使用</span>
<div class="b btn" style="left:668px;top:30px;width:80px;height:20px;"></div>
<span class="t " style="left:676px;top:33px;">スロット1</span>
<svg class="ic" style="left:737px;top:39px" width="7" height="4" viewBox="0 0 7 4"><path d="M0.4,0.4 L3.5,3.5 L6.6,0.4" fill="none" stroke="#e6e6e6" stroke-width="1.3" stroke-linecap="round" stroke-linejoin="round"/></svg>
<div class="b btn" style="left:753px;top:30px;width:212px;height:20px;"></div>
<div class="b " style="left:783px;top:31px;width:121px;height:18px;background:#1d1d1d;border-left:1px solid #3d3d3d"></div>
<div class="b " style="left:904px;top:31px;width:20px;height:18px;background:#545454;border-left:1px solid #333"></div>
<div class="b " style="left:924px;top:31px;width:21px;height:18px;background:#545454;border-left:1px solid #333"></div>
<div class="b " style="left:945px;top:31px;width:19px;height:18px;background:#545454;border-left:1px solid #333;border-radius:0 3px 3px 0"></div>
<svg class="ic" style="left:758px;top:33px" width="14" height="14" viewBox="0 0 14 14"><circle cx="7" cy="7" r="6.9" fill="#e6e6e6"/><path d="M7.7,1.3 L7.7,8.4 Q10.9,8.3 12.6,6.2 A5.9 5.9 0 0 0 7.7,1.3 Z" fill="#1d1d1d"/><path d="M6.6,9.2 L6.6,12.8 A5.9 5.9 0 0 1 1.4,7.6 Q3.8,9.1 6.6,9.2 Z" fill="#1d1d1d"/></svg>
<svg class="ic" style="left:774px;top:39px" width="7" height="4" viewBox="0 0 7 4"><path d="M0.4,0.4 L3.5,3.5 L6.6,0.4" fill="none" stroke="#e6e6e6" stroke-width="1.3" stroke-linecap="round" stroke-linejoin="round"/></svg>
<span class="t " style="left:792px;top:33px;">YF01.body</span>
<svg class="ic" style="left:906px;top:32px" width="16" height="16" viewBox="0 0 16 16"><path d="M8,1.6 C10,2.8 12.2,3.2 14,3.2 C14,8.4 12.4,12.4 8,14.6 C3.6,12.4 2,8.4 2,3.2 C3.8,3.2 6,2.8 8,1.6 Z" fill="none" stroke="#a4a4a4" stroke-width="1.05" stroke-linejoin="round"/></svg>
<svg class="ic" style="left:926.5px;top:32px" width="16" height="16" viewBox="0 0 16 16"><g fill="none" stroke="#e6e6e6" stroke-width="1.05" stroke-linejoin="round"><path d="M5.2,1.2 H11.4 L14.4,4.2 V11.2 H5.2 Z"/><path d="M11.2,1.4 V4.4 H14.2"/><path d="M5,4.6 H1.8 V14.6 H10.6 V11.4"/></g></svg>
<svg class="ic" style="left:949px;top:34px" width="12" height="12" viewBox="0 0 12 12"><path d="M2.4,2.4 L9.6,9.6 M9.6,2.4 L2.4,9.6" fill="none" stroke="#e6e6e6" stroke-width="1.3" stroke-linecap="round"/></svg>
<svg class="ic" style="left:973px;top:32px" width="16" height="16" viewBox="0 0 16 16"><g fill="none" stroke="#bdbdbd" stroke-width="1.05" stroke-linecap="round" stroke-linejoin="round"><path d="M9.2,1.4 L14.4,6.6 L12.6,7.2 L10.0,9.8 L10.2,12.6 L3.2,5.6 L6.0,5.8 L8.6,3.2 Z"/><path d="M6.6,9.2 L1.6,14.2"/></g></svg>
<div class="b " style="left:1550px;top:30px;width:19px;height:20px;background:#2f2f2f;border-radius:4px"></div>
<svg class="ic" style="left:1552px;top:32px" width="16" height="16" viewBox="0 0 16 16"><path d="M14,14.7 H6.8 V2 M2.6,6.2 L6.8,1.9 L11,6.2" fill="none" stroke="#6a6a6a" stroke-width="1.1" stroke-linecap="round" stroke-linejoin="round"/></svg>
<div class="b btn" style="left:1575px;top:30px;width:52px;height:20px;"></div>
<div class="b " style="left:1576px;top:31px;width:18px;height:18px;background:#545454;border-radius:3px 0 0 3px"></div>
<svg class="ic" style="left:1577px;top:32px" width="16" height="16" viewBox="0 0 16 16"><path d="M2.74,6.1 L5.92,2.92 A5.2 5.2 0 0 1 13.28,10.28 L10.1,13.46 L7.98,11.34 L11.16,8.16 A2.2 2.2 0 0 0 8.04,5.04 L4.86,8.22 Z" fill="none" stroke="#cdcdcd" stroke-width="1" stroke-linejoin="round"/></svg>
<svg class="ic" style="left:1598px;top:32px" width="16" height="16" viewBox="0 0 16 16"><rect x="2" y="2.2" width="5" height="5" fill="#e6e6e6"/><path d="M4.5,8.6 V15 M11.5,1.5 V15 M8,5.5 H15 M1,12.5 H15" fill="none" stroke="#e6e6e6" stroke-width="1"/></svg>
<svg class="ic" style="left:1617px;top:39px" width="7" height="4" viewBox="0 0 7 4"><path d="M0.4,0.4 L3.5,3.5 L6.6,0.4" fill="none" stroke="#e6e6e6" stroke-width="1.3" stroke-linecap="round" stroke-linejoin="round"/></svg>
<div class="b btn" style="left:1632px;top:30px;width:40px;height:20px;"></div>
<div class="b " style="left:1633px;top:31px;width:18px;height:18px;background:#4772b3;border-radius:3px 0 0 3px"></div>
<svg class="ic" style="left:1634px;top:32px" width="16" height="16" viewBox="0 0 16 16"><circle cx="7" cy="10.4" r="4.7" fill="none" stroke="#fff" stroke-width="1.1"/><circle cx="10.3" cy="6.3" r="5.6" fill="#4772b3"/><circle cx="10.3" cy="6.3" r="4.7" fill="#fff"/><path d="M7.4,8.3 A2.8 2.8 0 0 1 9.6,7.1 M10.6,8.6 V10.2" fill="none" stroke="#4772b3" stroke-width="0.9"/></svg>
<svg class="ic" style="left:1658px;top:39px" width="7" height="4" viewBox="0 0 7 4"><path d="M0.4,0.4 L3.5,3.5 L6.6,0.4" fill="none" stroke="#e6e6e6" stroke-width="1.3" stroke-linecap="round" stroke-linejoin="round"/></svg>
<div class="b " style="left:0px;top:64px;width:8px;height:20px;background:#1a1a1a;border-radius:0 5px 5px 0"></div>
<svg class="ic" style="left:1px;top:70px" width="5" height="9" viewBox="0 0 5 9"><path d="M0.6,0.7 L4.3,4.5 L0.6,8.3" fill="none" stroke="#d0d0d0" stroke-width="1.1" stroke-linecap="round" stroke-linejoin="round"/></svg>
<svg class="ic" style="left:19px;top:67px" width="14" height="14" viewBox="0 0 14 14"><g fill="none" stroke="#e6e6e6" stroke-width="1.05"><path d="M0.6,4 V0.6 H4 M10,0.6 H13.4 V4 M13.4,10 V13.4 H10 M4,13.4 H0.6 V10"/></g><rect x="3" y="3" width="8" height="8" fill="#e6e6e6"/></svg>
<span class="t " style="left:42px;top:67px;">YF01.body</span>
<svg class="ic" style="left:112px;top:70.5px" width="6" height="9" viewBox="0 0 6 9"><path d="M0.7,0.7 L5,4.5 L0.7,8.3" fill="none" stroke="#e6e6e6" stroke-width="1.3" stroke-linecap="round" stroke-linejoin="round"/></svg>
<svg class="ic" style="left:127px;top:67px" width="15" height="15" viewBox="0 0 15 15"><path d="M2.4,2.4 H12.6 L7.5,12.6 Z" fill="none" stroke="#e6e6e6" stroke-width="1.05"/><g fill="#1d1d1d" stroke="#e6e6e6" stroke-width="1.1"><rect x="0.8" y="0.8" width="3.2" height="3.2"/><rect x="11" y="0.8" width="3.2" height="3.2"/><rect x="5.9" y="11" width="3.2" height="3.2"/></g></svg>
<span class="t " style="left:150px;top:67px;">base</span>
<svg class="ic" style="left:190px;top:70.5px" width="6" height="9" viewBox="0 0 6 9"><path d="M0.7,0.7 L5,4.5 L0.7,8.3" fill="none" stroke="#e6e6e6" stroke-width="1.3" stroke-linecap="round" stroke-linejoin="round"/></svg>
<svg class="ic" style="left:205px;top:67px" width="14" height="14" viewBox="0 0 14 14"><circle cx="7" cy="7" r="6.9" fill="#e6e6e6"/><path d="M7.7,1.3 L7.7,8.4 Q10.9,8.3 12.6,6.2 A5.9 5.9 0 0 0 7.7,1.3 Z" fill="#1d1d1d"/><path d="M6.6,9.2 L6.6,12.8 A5.9 5.9 0 0 1 1.4,7.6 Q3.8,9.1 6.6,9.2 Z" fill="#1d1d1d"/></svg>
<span class="t " style="left:228px;top:67px;">YF01.body</span>
<div class="b " style="left:1674px;top:62px;width:3px;height:899px;background:#333;border-radius:1.5px"></div>
<div class="b " style="left:1671px;top:65px;width:9px;height:17px;background:#1c1c1c;border-radius:5px 0 0 5px"></div>
<svg class="ic" style="left:1673px;top:70px" width="6" height="8" viewBox="0 0 6 8"><path d="M5,0.6 L0.9,3.7 L5,6.8" fill="none" stroke="#d0d0d0" stroke-width="1.1" stroke-linecap="round" stroke-linejoin="round"/></svg>
<div class="b " style="left:9px;top:971px;width:1661px;height:3px;background:#333;border-radius:1.5px"></div>
<div id="status"></div>
<svg class="ic" style="left:12px;top:980px" width="12" height="16" viewBox="0 0 12 16"><rect x="0.7" y="0.7" width="10" height="14" rx="4.6" fill="none" stroke="#9a9a9a" stroke-width="1.05"/><path d="M0.7,7 V5.3 A4.6 4.6 0 0 1 5.3,0.7 H5.6 V7 Z" fill="#9a9a9a"/></svg>
<span class="t d" style="left:34px;top:980px;">選択</span>
<svg class="ic" style="left:222px;top:980px" width="12" height="16" viewBox="0 0 12 16"><rect x="0.7" y="0.7" width="10" height="14" rx="4.6" fill="none" stroke="#9a9a9a" stroke-width="1.05"/><rect x="4.3" y="2.6" width="2.8" height="5" rx="1.2" fill="#9a9a9a"/></svg>
<span class="t d" style="left:245px;top:980px;">視点の移動</span>
<svg class="ic" style="left:433px;top:980px" width="12" height="16" viewBox="0 0 12 16"><rect x="0.7" y="0.7" width="10" height="14" rx="4.6" fill="none" stroke="#9a9a9a" stroke-width="1.05"/><path d="M10.7,7 V5.3 A4.6 4.6 0 0 0 6.1,0.7 H5.8 V7 Z" fill="#9a9a9a"/></svg>
<span class="t d" style="left:456px;top:980px;">ノードコンテクストメニュー</span>
<span class="t d" style="left:0px;top:980px;left:auto;right:9px;letter-spacing:0.085px">Collection | YF01.body | 頂点:70,622 | 面:66,825 | 三角面:133,650 | オブジェクト:0/8 | 期間:&nbsp; 00:10+10 (フレーム 1/250) | 3.6.1</span>
</div>
</body></html>
